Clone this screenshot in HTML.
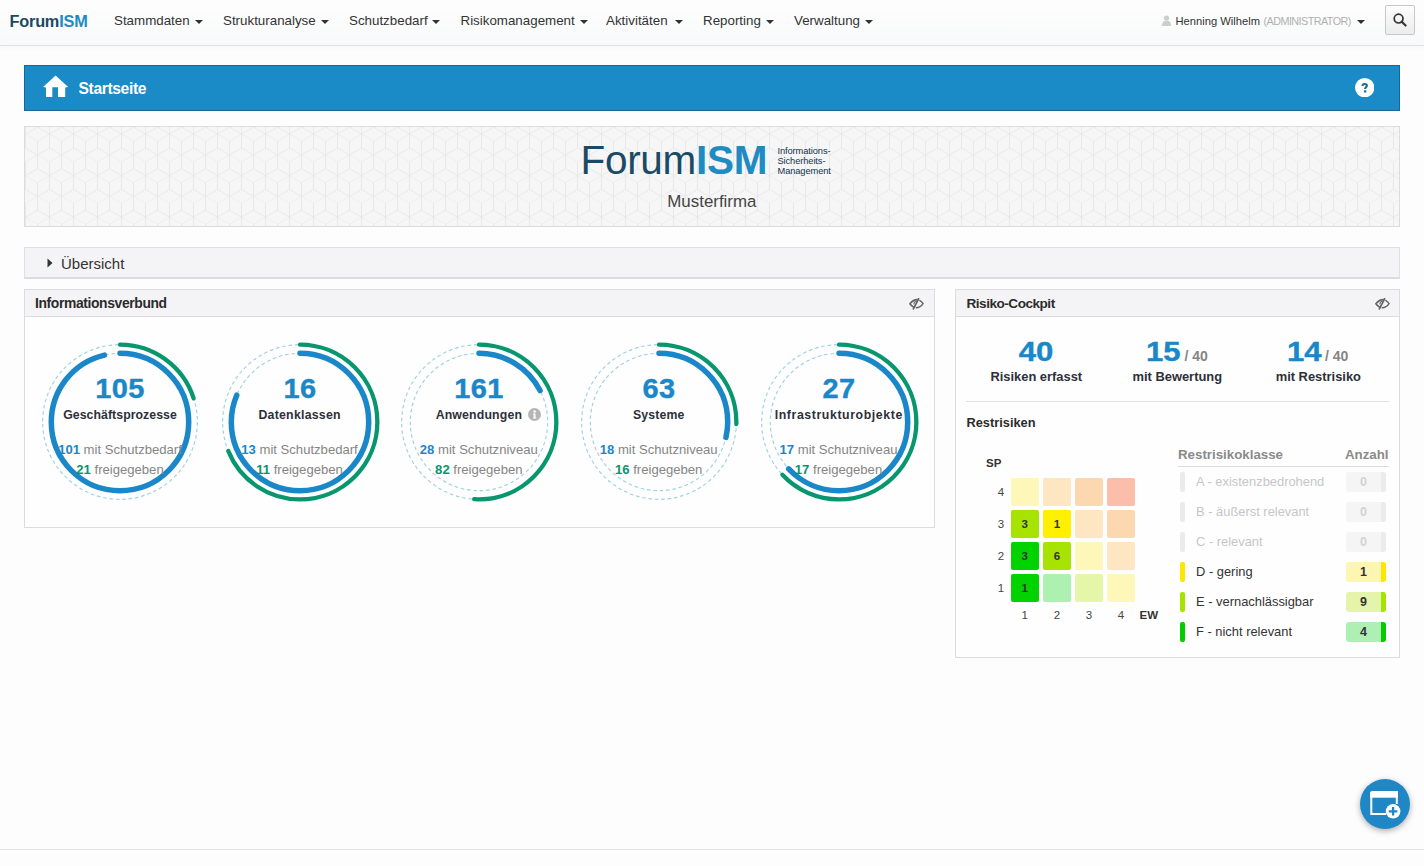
<!DOCTYPE html>
<html><head><meta charset="utf-8">
<style>
*{box-sizing:border-box;margin:0;padding:0}
html,body{width:1424px;height:866px;overflow:hidden;background:#fdfdfd;font-family:"Liberation Sans",sans-serif;color:#333}
.abs{position:absolute}
.t{position:absolute;line-height:1;white-space:nowrap}
#nav{position:absolute;left:0;top:0;width:1424px;height:46px;background:linear-gradient(#fefefe,#f8f9fa);border-bottom:1px solid #e2e2e4;box-shadow:0 1px 4px rgba(0,0,0,.035)}
#hdr{position:absolute;left:24px;top:65px;width:1376px;height:46px;background:#1b8bc8;border:1px solid #1a6593}
#banner{position:absolute;left:24px;top:126px;width:1376px;height:101px;background:#f6f6f7;border:1px solid #dcdcde;overflow:hidden}
#ov{position:absolute;left:24px;top:247px;width:1376px;height:32px;background:#f4f4f6;border:1px solid #e0e0e2;border-bottom:2px solid #dcdcdf}
.panel{position:absolute;background:#fefefe;border:1px solid #dcdcde}
.ph{position:absolute;left:0;top:0;right:0;height:27px;background:#f4f4f6;border-bottom:1px solid #dcdcde}
</style></head>
<body>

<div id="nav">
<div class="t" style="left:9.5px;top:13.20px;font-size:16.3px;color:#333;font-weight:bold;letter-spacing:-0.2px;"><span style="color:#1b4a65">Forum</span><span style="color:#1e8bc3">ISM</span></div>
<div class="t" style="left:114px;top:13.70px;font-size:13.35px;color:#333;">Stammdaten</div>
<div class="abs" style="left:195px;top:20px;width:0;height:0;border-left:4.0px solid transparent;border-right:4.0px solid transparent;border-top:4px solid #333"></div>
<div class="t" style="left:223px;top:13.70px;font-size:13.35px;color:#333;">Strukturanalyse</div>
<div class="abs" style="left:321px;top:20px;width:0;height:0;border-left:4.0px solid transparent;border-right:4.0px solid transparent;border-top:4px solid #333"></div>
<div class="t" style="left:349px;top:13.70px;font-size:13.35px;color:#333;">Schutzbedarf</div>
<div class="abs" style="left:432px;top:20px;width:0;height:0;border-left:4.0px solid transparent;border-right:4.0px solid transparent;border-top:4px solid #333"></div>
<div class="t" style="left:460.5px;top:13.70px;font-size:13.35px;color:#333;">Risikomanagement</div>
<div class="abs" style="left:579.5px;top:20px;width:0;height:0;border-left:4.0px solid transparent;border-right:4.0px solid transparent;border-top:4px solid #333"></div>
<div class="t" style="left:606px;top:13.70px;font-size:13.35px;color:#333;">Aktivitäten</div>
<div class="abs" style="left:675px;top:20px;width:0;height:0;border-left:4.0px solid transparent;border-right:4.0px solid transparent;border-top:4px solid #333"></div>
<div class="t" style="left:703px;top:13.70px;font-size:13.35px;color:#333;">Reporting</div>
<div class="abs" style="left:766px;top:20px;width:0;height:0;border-left:4.0px solid transparent;border-right:4.0px solid transparent;border-top:4px solid #333"></div>
<div class="t" style="left:794px;top:13.70px;font-size:13.35px;color:#333;">Verwaltung</div>
<div class="abs" style="left:864.5px;top:20px;width:0;height:0;border-left:4.0px solid transparent;border-right:4.0px solid transparent;border-top:4px solid #333"></div>
<div class="t" style="left:1175.5px;top:15.82px;font-size:11.2px;color:#333;">Henning Wilhelm</div>
<div class="t" style="left:1263.5px;top:16.16px;font-size:10.8px;color:#b0b0b0;letter-spacing:-0.55px;">(ADMINISTRATOR)</div>
<div class="abs" style="left:1357px;top:20px;width:0;height:0;border-left:4.0px solid transparent;border-right:4.0px solid transparent;border-top:4px solid #333"></div>
<svg class="abs" style="left:1162px;top:15px" width="9" height="11" viewBox="0 0 9 11"><circle cx="4.5" cy="3" r="2.6" fill="#cdcdcd"/><path d="M0 11 C0 6.5 2 5.8 4.5 5.8 C7 5.8 9 6.5 9 11Z" fill="#cdcdcd"/></svg>
<div class="abs" style="left:1385px;top:5px;width:30px;height:30px;border:1px solid #c8c8c8;border-radius:2px;background:linear-gradient(#fdfdfd,#ececec)"></div>
<svg class="abs" style="left:1393px;top:13px" width="14" height="14" viewBox="0 0 14 14"><circle cx="5.6" cy="5.6" r="4.4" fill="none" stroke="#333" stroke-width="1.7"/><path d="M8.7 8.7 L12.6 12.6" stroke="#333" stroke-width="2.1" stroke-linecap="round"/></svg>
</div>
<div id="hdr"></div>
<svg class="abs" style="left:42px;top:75px" width="28" height="24" viewBox="0 0 28 24"><path d="M13.6 0.6 L26.2 11.9 L23.2 12.4 V22.1 H16 V12.3 H10.3 V22.1 H4 V12.4 L1.1 11.9 Z" fill="#fff"/></svg>
<div class="t" style="left:78.5px;top:81.19px;font-size:15.6px;color:#fff;font-weight:bold;letter-spacing:-0.35px;">Startseite</div>
<svg class="abs" style="left:1354.5px;top:77.8px" width="19.4" height="19.4" viewBox="0 0 19.4 19.4"><circle cx="9.7" cy="9.7" r="9.7" fill="#fff"/><path d="M7.5 8 C7.5 6.5 8.4 6 9.7 6 C11 6 11.9 6.6 11.9 7.7 C11.9 9.1 10.1 9.3 10.1 11" fill="none" stroke="#1c6d9e" stroke-width="2.1"/><rect x="8.9" y="12.3" width="2.4" height="2.2" fill="#1c6d9e"/></svg>
<div id="banner">
<svg class="abs" style="left:0;top:0" width="1374" height="99"><path d="M-35.5 -55.3L-23.5 -62.2L-11.5 -55.3M-35.5 -41.4L-23.5 -34.5L-11.5 -41.4M-35.5 -55.3L-23.5 -48.3L-11.5 -55.3M-11.5 -55.3L0.5 -62.2L12.5 -55.3M-11.5 -41.4L0.5 -34.5L12.5 -41.4M-11.5 -55.3L0.5 -48.3L12.5 -55.3M12.5 -55.3L24.5 -62.2L36.5 -55.3M12.5 -41.4L24.5 -34.5L36.5 -41.4M12.5 -55.3L24.5 -48.3L36.5 -55.3M36.5 -55.3L48.5 -62.2L60.5 -55.3M36.5 -41.4L48.5 -34.5L60.5 -41.4M36.5 -55.3L48.5 -48.3L60.5 -55.3M60.5 -55.3L72.5 -62.2L84.5 -55.3M60.5 -41.4L72.5 -34.5L84.5 -41.4M60.5 -55.3L72.5 -48.3L84.5 -55.3M84.5 -55.3L96.5 -62.2L108.5 -55.3M84.5 -41.4L96.5 -34.5L108.5 -41.4M84.5 -55.3L96.5 -48.3L108.5 -55.3M108.5 -55.3L120.5 -62.2L132.5 -55.3M108.5 -41.4L120.5 -34.5L132.5 -41.4M108.5 -55.3L120.5 -48.3L132.5 -55.3M132.5 -55.3L144.5 -62.2L156.5 -55.3M132.5 -41.4L144.5 -34.5L156.5 -41.4M132.5 -55.3L144.5 -48.3L156.5 -55.3M156.5 -55.3L168.5 -62.2L180.5 -55.3M156.5 -41.4L168.5 -34.5L180.5 -41.4M156.5 -55.3L168.5 -48.3L180.5 -55.3M180.5 -55.3L192.5 -62.2L204.5 -55.3M180.5 -41.4L192.5 -34.5L204.5 -41.4M180.5 -55.3L192.5 -48.3L204.5 -55.3M204.5 -55.3L216.5 -62.2L228.5 -55.3M204.5 -41.4L216.5 -34.5L228.5 -41.4M204.5 -55.3L216.5 -48.3L228.5 -55.3M228.5 -55.3L240.5 -62.2L252.5 -55.3M228.5 -41.4L240.5 -34.5L252.5 -41.4M228.5 -55.3L240.5 -48.3L252.5 -55.3M252.5 -55.3L264.5 -62.2L276.5 -55.3M252.5 -41.4L264.5 -34.5L276.5 -41.4M252.5 -55.3L264.5 -48.3L276.5 -55.3M276.5 -55.3L288.5 -62.2L300.5 -55.3M276.5 -41.4L288.5 -34.5L300.5 -41.4M276.5 -55.3L288.5 -48.3L300.5 -55.3M300.5 -55.3L312.5 -62.2L324.5 -55.3M300.5 -41.4L312.5 -34.5L324.5 -41.4M300.5 -55.3L312.5 -48.3L324.5 -55.3M324.5 -55.3L336.5 -62.2L348.5 -55.3M324.5 -41.4L336.5 -34.5L348.5 -41.4M324.5 -55.3L336.5 -48.3L348.5 -55.3M348.5 -55.3L360.5 -62.2L372.5 -55.3M348.5 -41.4L360.5 -34.5L372.5 -41.4M348.5 -55.3L360.5 -48.3L372.5 -55.3M372.5 -55.3L384.5 -62.2L396.5 -55.3M372.5 -41.4L384.5 -34.5L396.5 -41.4M372.5 -55.3L384.5 -48.3L396.5 -55.3M396.5 -55.3L408.5 -62.2L420.5 -55.3M396.5 -41.4L408.5 -34.5L420.5 -41.4M396.5 -55.3L408.5 -48.3L420.5 -55.3M420.5 -55.3L432.5 -62.2L444.5 -55.3M420.5 -41.4L432.5 -34.5L444.5 -41.4M420.5 -55.3L432.5 -48.3L444.5 -55.3M444.5 -55.3L456.5 -62.2L468.5 -55.3M444.5 -41.4L456.5 -34.5L468.5 -41.4M444.5 -55.3L456.5 -48.3L468.5 -55.3M468.5 -55.3L480.5 -62.2L492.5 -55.3M468.5 -41.4L480.5 -34.5L492.5 -41.4M468.5 -55.3L480.5 -48.3L492.5 -55.3M492.5 -55.3L504.5 -62.2L516.5 -55.3M492.5 -41.4L504.5 -34.5L516.5 -41.4M492.5 -55.3L504.5 -48.3L516.5 -55.3M516.5 -55.3L528.5 -62.2L540.5 -55.3M516.5 -41.4L528.5 -34.5L540.5 -41.4M516.5 -55.3L528.5 -48.3L540.5 -55.3M540.5 -55.3L552.5 -62.2L564.5 -55.3M540.5 -41.4L552.5 -34.5L564.5 -41.4M540.5 -55.3L552.5 -48.3L564.5 -55.3M564.5 -55.3L576.5 -62.2L588.5 -55.3M564.5 -41.4L576.5 -34.5L588.5 -41.4M564.5 -55.3L576.5 -48.3L588.5 -55.3M588.5 -55.3L600.5 -62.2L612.5 -55.3M588.5 -41.4L600.5 -34.5L612.5 -41.4M588.5 -55.3L600.5 -48.3L612.5 -55.3M612.5 -55.3L624.5 -62.2L636.5 -55.3M612.5 -41.4L624.5 -34.5L636.5 -41.4M612.5 -55.3L624.5 -48.3L636.5 -55.3M636.5 -55.3L648.5 -62.2L660.5 -55.3M636.5 -41.4L648.5 -34.5L660.5 -41.4M636.5 -55.3L648.5 -48.3L660.5 -55.3M660.5 -55.3L672.5 -62.2L684.5 -55.3M660.5 -41.4L672.5 -34.5L684.5 -41.4M660.5 -55.3L672.5 -48.3L684.5 -55.3M684.5 -55.3L696.5 -62.2L708.5 -55.3M684.5 -41.4L696.5 -34.5L708.5 -41.4M684.5 -55.3L696.5 -48.3L708.5 -55.3M708.5 -55.3L720.5 -62.2L732.5 -55.3M708.5 -41.4L720.5 -34.5L732.5 -41.4M708.5 -55.3L720.5 -48.3L732.5 -55.3M732.5 -55.3L744.5 -62.2L756.5 -55.3M732.5 -41.4L744.5 -34.5L756.5 -41.4M732.5 -55.3L744.5 -48.3L756.5 -55.3M756.5 -55.3L768.5 -62.2L780.5 -55.3M756.5 -41.4L768.5 -34.5L780.5 -41.4M756.5 -55.3L768.5 -48.3L780.5 -55.3M780.5 -55.3L792.5 -62.2L804.5 -55.3M780.5 -41.4L792.5 -34.5L804.5 -41.4M780.5 -55.3L792.5 -48.3L804.5 -55.3M804.5 -55.3L816.5 -62.2L828.5 -55.3M804.5 -41.4L816.5 -34.5L828.5 -41.4M804.5 -55.3L816.5 -48.3L828.5 -55.3M828.5 -55.3L840.5 -62.2L852.5 -55.3M828.5 -41.4L840.5 -34.5L852.5 -41.4M828.5 -55.3L840.5 -48.3L852.5 -55.3M852.5 -55.3L864.5 -62.2L876.5 -55.3M852.5 -41.4L864.5 -34.5L876.5 -41.4M852.5 -55.3L864.5 -48.3L876.5 -55.3M876.5 -55.3L888.5 -62.2L900.5 -55.3M876.5 -41.4L888.5 -34.5L900.5 -41.4M876.5 -55.3L888.5 -48.3L900.5 -55.3M900.5 -55.3L912.5 -62.2L924.5 -55.3M900.5 -41.4L912.5 -34.5L924.5 -41.4M900.5 -55.3L912.5 -48.3L924.5 -55.3M924.5 -55.3L936.5 -62.2L948.5 -55.3M924.5 -41.4L936.5 -34.5L948.5 -41.4M924.5 -55.3L936.5 -48.3L948.5 -55.3M948.5 -55.3L960.5 -62.2L972.5 -55.3M948.5 -41.4L960.5 -34.5L972.5 -41.4M948.5 -55.3L960.5 -48.3L972.5 -55.3M972.5 -55.3L984.5 -62.2L996.5 -55.3M972.5 -41.4L984.5 -34.5L996.5 -41.4M972.5 -55.3L984.5 -48.3L996.5 -55.3M996.5 -55.3L1008.5 -62.2L1020.5 -55.3M996.5 -41.4L1008.5 -34.5L1020.5 -41.4M996.5 -55.3L1008.5 -48.3L1020.5 -55.3M1020.5 -55.3L1032.5 -62.2L1044.5 -55.3M1020.5 -41.4L1032.5 -34.5L1044.5 -41.4M1020.5 -55.3L1032.5 -48.3L1044.5 -55.3M1044.5 -55.3L1056.5 -62.2L1068.5 -55.3M1044.5 -41.4L1056.5 -34.5L1068.5 -41.4M1044.5 -55.3L1056.5 -48.3L1068.5 -55.3M1068.5 -55.3L1080.5 -62.2L1092.5 -55.3M1068.5 -41.4L1080.5 -34.5L1092.5 -41.4M1068.5 -55.3L1080.5 -48.3L1092.5 -55.3M1092.5 -55.3L1104.5 -62.2L1116.5 -55.3M1092.5 -41.4L1104.5 -34.5L1116.5 -41.4M1092.5 -55.3L1104.5 -48.3L1116.5 -55.3M1116.5 -55.3L1128.5 -62.2L1140.5 -55.3M1116.5 -41.4L1128.5 -34.5L1140.5 -41.4M1116.5 -55.3L1128.5 -48.3L1140.5 -55.3M1140.5 -55.3L1152.5 -62.2L1164.5 -55.3M1140.5 -41.4L1152.5 -34.5L1164.5 -41.4M1140.5 -55.3L1152.5 -48.3L1164.5 -55.3M1164.5 -55.3L1176.5 -62.2L1188.5 -55.3M1164.5 -41.4L1176.5 -34.5L1188.5 -41.4M1164.5 -55.3L1176.5 -48.3L1188.5 -55.3M1188.5 -55.3L1200.5 -62.2L1212.5 -55.3M1188.5 -41.4L1200.5 -34.5L1212.5 -41.4M1188.5 -55.3L1200.5 -48.3L1212.5 -55.3M1212.5 -55.3L1224.5 -62.2L1236.5 -55.3M1212.5 -41.4L1224.5 -34.5L1236.5 -41.4M1212.5 -55.3L1224.5 -48.3L1236.5 -55.3M1236.5 -55.3L1248.5 -62.2L1260.5 -55.3M1236.5 -41.4L1248.5 -34.5L1260.5 -41.4M1236.5 -55.3L1248.5 -48.3L1260.5 -55.3M1260.5 -55.3L1272.5 -62.2L1284.5 -55.3M1260.5 -41.4L1272.5 -34.5L1284.5 -41.4M1260.5 -55.3L1272.5 -48.3L1284.5 -55.3M1284.5 -55.3L1296.5 -62.2L1308.5 -55.3M1284.5 -41.4L1296.5 -34.5L1308.5 -41.4M1284.5 -55.3L1296.5 -48.3L1308.5 -55.3M1308.5 -55.3L1320.5 -62.2L1332.5 -55.3M1308.5 -41.4L1320.5 -34.5L1332.5 -41.4M1308.5 -55.3L1320.5 -48.3L1332.5 -55.3M1332.5 -55.3L1344.5 -62.2L1356.5 -55.3M1332.5 -41.4L1344.5 -34.5L1356.5 -41.4M1332.5 -55.3L1344.5 -48.3L1356.5 -55.3M1356.5 -55.3L1368.5 -62.2L1380.5 -55.3M1356.5 -41.4L1368.5 -34.5L1380.5 -41.4M1356.5 -55.3L1368.5 -48.3L1380.5 -55.3M1380.5 -55.3L1392.5 -62.2L1404.5 -55.3M1380.5 -41.4L1392.5 -34.5L1404.5 -41.4M1380.5 -55.3L1392.5 -48.3L1404.5 -55.3M-23.5 -34.5L-11.5 -41.4L0.5 -34.5M-23.5 -20.6L-11.5 -13.7L0.5 -20.6M-23.5 -34.5L-11.5 -27.6L0.5 -34.5M0.5 -34.5L12.5 -41.4L24.5 -34.5M0.5 -20.6L12.5 -13.7L24.5 -20.6M0.5 -34.5L12.5 -27.6L24.5 -34.5M24.5 -34.5L36.5 -41.4L48.5 -34.5M24.5 -20.6L36.5 -13.7L48.5 -20.6M24.5 -34.5L36.5 -27.6L48.5 -34.5M48.5 -34.5L60.5 -41.4L72.5 -34.5M48.5 -20.6L60.5 -13.7L72.5 -20.6M48.5 -34.5L60.5 -27.6L72.5 -34.5M72.5 -34.5L84.5 -41.4L96.5 -34.5M72.5 -20.6L84.5 -13.7L96.5 -20.6M72.5 -34.5L84.5 -27.6L96.5 -34.5M96.5 -34.5L108.5 -41.4L120.5 -34.5M96.5 -20.6L108.5 -13.7L120.5 -20.6M96.5 -34.5L108.5 -27.6L120.5 -34.5M120.5 -34.5L132.5 -41.4L144.5 -34.5M120.5 -20.6L132.5 -13.7L144.5 -20.6M120.5 -34.5L132.5 -27.6L144.5 -34.5M144.5 -34.5L156.5 -41.4L168.5 -34.5M144.5 -20.6L156.5 -13.7L168.5 -20.6M144.5 -34.5L156.5 -27.6L168.5 -34.5M168.5 -34.5L180.5 -41.4L192.5 -34.5M168.5 -20.6L180.5 -13.7L192.5 -20.6M168.5 -34.5L180.5 -27.6L192.5 -34.5M192.5 -34.5L204.5 -41.4L216.5 -34.5M192.5 -20.6L204.5 -13.7L216.5 -20.6M192.5 -34.5L204.5 -27.6L216.5 -34.5M216.5 -34.5L228.5 -41.4L240.5 -34.5M216.5 -20.6L228.5 -13.7L240.5 -20.6M216.5 -34.5L228.5 -27.6L240.5 -34.5M240.5 -34.5L252.5 -41.4L264.5 -34.5M240.5 -20.6L252.5 -13.7L264.5 -20.6M240.5 -34.5L252.5 -27.6L264.5 -34.5M264.5 -34.5L276.5 -41.4L288.5 -34.5M264.5 -20.6L276.5 -13.7L288.5 -20.6M264.5 -34.5L276.5 -27.6L288.5 -34.5M288.5 -34.5L300.5 -41.4L312.5 -34.5M288.5 -20.6L300.5 -13.7L312.5 -20.6M288.5 -34.5L300.5 -27.6L312.5 -34.5M312.5 -34.5L324.5 -41.4L336.5 -34.5M312.5 -20.6L324.5 -13.7L336.5 -20.6M312.5 -34.5L324.5 -27.6L336.5 -34.5M336.5 -34.5L348.5 -41.4L360.5 -34.5M336.5 -20.6L348.5 -13.7L360.5 -20.6M336.5 -34.5L348.5 -27.6L360.5 -34.5M360.5 -34.5L372.5 -41.4L384.5 -34.5M360.5 -20.6L372.5 -13.7L384.5 -20.6M360.5 -34.5L372.5 -27.6L384.5 -34.5M384.5 -34.5L396.5 -41.4L408.5 -34.5M384.5 -20.6L396.5 -13.7L408.5 -20.6M384.5 -34.5L396.5 -27.6L408.5 -34.5M408.5 -34.5L420.5 -41.4L432.5 -34.5M408.5 -20.6L420.5 -13.7L432.5 -20.6M408.5 -34.5L420.5 -27.6L432.5 -34.5M432.5 -34.5L444.5 -41.4L456.5 -34.5M432.5 -20.6L444.5 -13.7L456.5 -20.6M432.5 -34.5L444.5 -27.6L456.5 -34.5M456.5 -34.5L468.5 -41.4L480.5 -34.5M456.5 -20.6L468.5 -13.7L480.5 -20.6M456.5 -34.5L468.5 -27.6L480.5 -34.5M480.5 -34.5L492.5 -41.4L504.5 -34.5M480.5 -20.6L492.5 -13.7L504.5 -20.6M480.5 -34.5L492.5 -27.6L504.5 -34.5M504.5 -34.5L516.5 -41.4L528.5 -34.5M504.5 -20.6L516.5 -13.7L528.5 -20.6M504.5 -34.5L516.5 -27.6L528.5 -34.5M528.5 -34.5L540.5 -41.4L552.5 -34.5M528.5 -20.6L540.5 -13.7L552.5 -20.6M528.5 -34.5L540.5 -27.6L552.5 -34.5M552.5 -34.5L564.5 -41.4L576.5 -34.5M552.5 -20.6L564.5 -13.7L576.5 -20.6M552.5 -34.5L564.5 -27.6L576.5 -34.5M576.5 -34.5L588.5 -41.4L600.5 -34.5M576.5 -20.6L588.5 -13.7L600.5 -20.6M576.5 -34.5L588.5 -27.6L600.5 -34.5M600.5 -34.5L612.5 -41.4L624.5 -34.5M600.5 -20.6L612.5 -13.7L624.5 -20.6M600.5 -34.5L612.5 -27.6L624.5 -34.5M624.5 -34.5L636.5 -41.4L648.5 -34.5M624.5 -20.6L636.5 -13.7L648.5 -20.6M624.5 -34.5L636.5 -27.6L648.5 -34.5M648.5 -34.5L660.5 -41.4L672.5 -34.5M648.5 -20.6L660.5 -13.7L672.5 -20.6M648.5 -34.5L660.5 -27.6L672.5 -34.5M672.5 -34.5L684.5 -41.4L696.5 -34.5M672.5 -20.6L684.5 -13.7L696.5 -20.6M672.5 -34.5L684.5 -27.6L696.5 -34.5M696.5 -34.5L708.5 -41.4L720.5 -34.5M696.5 -20.6L708.5 -13.7L720.5 -20.6M696.5 -34.5L708.5 -27.6L720.5 -34.5M720.5 -34.5L732.5 -41.4L744.5 -34.5M720.5 -20.6L732.5 -13.7L744.5 -20.6M720.5 -34.5L732.5 -27.6L744.5 -34.5M744.5 -34.5L756.5 -41.4L768.5 -34.5M744.5 -20.6L756.5 -13.7L768.5 -20.6M744.5 -34.5L756.5 -27.6L768.5 -34.5M768.5 -34.5L780.5 -41.4L792.5 -34.5M768.5 -20.6L780.5 -13.7L792.5 -20.6M768.5 -34.5L780.5 -27.6L792.5 -34.5M792.5 -34.5L804.5 -41.4L816.5 -34.5M792.5 -20.6L804.5 -13.7L816.5 -20.6M792.5 -34.5L804.5 -27.6L816.5 -34.5M816.5 -34.5L828.5 -41.4L840.5 -34.5M816.5 -20.6L828.5 -13.7L840.5 -20.6M816.5 -34.5L828.5 -27.6L840.5 -34.5M840.5 -34.5L852.5 -41.4L864.5 -34.5M840.5 -20.6L852.5 -13.7L864.5 -20.6M840.5 -34.5L852.5 -27.6L864.5 -34.5M864.5 -34.5L876.5 -41.4L888.5 -34.5M864.5 -20.6L876.5 -13.7L888.5 -20.6M864.5 -34.5L876.5 -27.6L888.5 -34.5M888.5 -34.5L900.5 -41.4L912.5 -34.5M888.5 -20.6L900.5 -13.7L912.5 -20.6M888.5 -34.5L900.5 -27.6L912.5 -34.5M912.5 -34.5L924.5 -41.4L936.5 -34.5M912.5 -20.6L924.5 -13.7L936.5 -20.6M912.5 -34.5L924.5 -27.6L936.5 -34.5M936.5 -34.5L948.5 -41.4L960.5 -34.5M936.5 -20.6L948.5 -13.7L960.5 -20.6M936.5 -34.5L948.5 -27.6L960.5 -34.5M960.5 -34.5L972.5 -41.4L984.5 -34.5M960.5 -20.6L972.5 -13.7L984.5 -20.6M960.5 -34.5L972.5 -27.6L984.5 -34.5M984.5 -34.5L996.5 -41.4L1008.5 -34.5M984.5 -20.6L996.5 -13.7L1008.5 -20.6M984.5 -34.5L996.5 -27.6L1008.5 -34.5M1008.5 -34.5L1020.5 -41.4L1032.5 -34.5M1008.5 -20.6L1020.5 -13.7L1032.5 -20.6M1008.5 -34.5L1020.5 -27.6L1032.5 -34.5M1032.5 -34.5L1044.5 -41.4L1056.5 -34.5M1032.5 -20.6L1044.5 -13.7L1056.5 -20.6M1032.5 -34.5L1044.5 -27.6L1056.5 -34.5M1056.5 -34.5L1068.5 -41.4L1080.5 -34.5M1056.5 -20.6L1068.5 -13.7L1080.5 -20.6M1056.5 -34.5L1068.5 -27.6L1080.5 -34.5M1080.5 -34.5L1092.5 -41.4L1104.5 -34.5M1080.5 -20.6L1092.5 -13.7L1104.5 -20.6M1080.5 -34.5L1092.5 -27.6L1104.5 -34.5M1104.5 -34.5L1116.5 -41.4L1128.5 -34.5M1104.5 -20.6L1116.5 -13.7L1128.5 -20.6M1104.5 -34.5L1116.5 -27.6L1128.5 -34.5M1128.5 -34.5L1140.5 -41.4L1152.5 -34.5M1128.5 -20.6L1140.5 -13.7L1152.5 -20.6M1128.5 -34.5L1140.5 -27.6L1152.5 -34.5M1152.5 -34.5L1164.5 -41.4L1176.5 -34.5M1152.5 -20.6L1164.5 -13.7L1176.5 -20.6M1152.5 -34.5L1164.5 -27.6L1176.5 -34.5M1176.5 -34.5L1188.5 -41.4L1200.5 -34.5M1176.5 -20.6L1188.5 -13.7L1200.5 -20.6M1176.5 -34.5L1188.5 -27.6L1200.5 -34.5M1200.5 -34.5L1212.5 -41.4L1224.5 -34.5M1200.5 -20.6L1212.5 -13.7L1224.5 -20.6M1200.5 -34.5L1212.5 -27.6L1224.5 -34.5M1224.5 -34.5L1236.5 -41.4L1248.5 -34.5M1224.5 -20.6L1236.5 -13.7L1248.5 -20.6M1224.5 -34.5L1236.5 -27.6L1248.5 -34.5M1248.5 -34.5L1260.5 -41.4L1272.5 -34.5M1248.5 -20.6L1260.5 -13.7L1272.5 -20.6M1248.5 -34.5L1260.5 -27.6L1272.5 -34.5M1272.5 -34.5L1284.5 -41.4L1296.5 -34.5M1272.5 -20.6L1284.5 -13.7L1296.5 -20.6M1272.5 -34.5L1284.5 -27.6L1296.5 -34.5M1296.5 -34.5L1308.5 -41.4L1320.5 -34.5M1296.5 -20.6L1308.5 -13.7L1320.5 -20.6M1296.5 -34.5L1308.5 -27.6L1320.5 -34.5M1320.5 -34.5L1332.5 -41.4L1344.5 -34.5M1320.5 -20.6L1332.5 -13.7L1344.5 -20.6M1320.5 -34.5L1332.5 -27.6L1344.5 -34.5M1344.5 -34.5L1356.5 -41.4L1368.5 -34.5M1344.5 -20.6L1356.5 -13.7L1368.5 -20.6M1344.5 -34.5L1356.5 -27.6L1368.5 -34.5M1368.5 -34.5L1380.5 -41.4L1392.5 -34.5M1368.5 -20.6L1380.5 -13.7L1392.5 -20.6M1368.5 -34.5L1380.5 -27.6L1392.5 -34.5M-35.5 -13.7L-23.5 -20.6L-11.5 -13.7M-35.5 0.1L-23.5 7.1L-11.5 0.1M-35.5 -13.7L-23.5 -6.8L-11.5 -13.7M-11.5 -13.7L0.5 -20.6L12.5 -13.7M-11.5 0.1L0.5 7.1L12.5 0.1M-11.5 -13.7L0.5 -6.8L12.5 -13.7M12.5 -13.7L24.5 -20.6L36.5 -13.7M12.5 0.1L24.5 7.1L36.5 0.1M12.5 -13.7L24.5 -6.8L36.5 -13.7M36.5 -13.7L48.5 -20.6L60.5 -13.7M36.5 0.1L48.5 7.1L60.5 0.1M36.5 -13.7L48.5 -6.8L60.5 -13.7M60.5 -13.7L72.5 -20.6L84.5 -13.7M60.5 0.1L72.5 7.1L84.5 0.1M60.5 -13.7L72.5 -6.8L84.5 -13.7M84.5 -13.7L96.5 -20.6L108.5 -13.7M84.5 0.1L96.5 7.1L108.5 0.1M84.5 -13.7L96.5 -6.8L108.5 -13.7M108.5 -13.7L120.5 -20.6L132.5 -13.7M108.5 0.1L120.5 7.1L132.5 0.1M108.5 -13.7L120.5 -6.8L132.5 -13.7M132.5 -13.7L144.5 -20.6L156.5 -13.7M132.5 0.1L144.5 7.1L156.5 0.1M132.5 -13.7L144.5 -6.8L156.5 -13.7M156.5 -13.7L168.5 -20.6L180.5 -13.7M156.5 0.1L168.5 7.1L180.5 0.1M156.5 -13.7L168.5 -6.8L180.5 -13.7M180.5 -13.7L192.5 -20.6L204.5 -13.7M180.5 0.1L192.5 7.1L204.5 0.1M180.5 -13.7L192.5 -6.8L204.5 -13.7M204.5 -13.7L216.5 -20.6L228.5 -13.7M204.5 0.1L216.5 7.1L228.5 0.1M204.5 -13.7L216.5 -6.8L228.5 -13.7M228.5 -13.7L240.5 -20.6L252.5 -13.7M228.5 0.1L240.5 7.1L252.5 0.1M228.5 -13.7L240.5 -6.8L252.5 -13.7M252.5 -13.7L264.5 -20.6L276.5 -13.7M252.5 0.1L264.5 7.1L276.5 0.1M252.5 -13.7L264.5 -6.8L276.5 -13.7M276.5 -13.7L288.5 -20.6L300.5 -13.7M276.5 0.1L288.5 7.1L300.5 0.1M276.5 -13.7L288.5 -6.8L300.5 -13.7M300.5 -13.7L312.5 -20.6L324.5 -13.7M300.5 0.1L312.5 7.1L324.5 0.1M300.5 -13.7L312.5 -6.8L324.5 -13.7M324.5 -13.7L336.5 -20.6L348.5 -13.7M324.5 0.1L336.5 7.1L348.5 0.1M324.5 -13.7L336.5 -6.8L348.5 -13.7M348.5 -13.7L360.5 -20.6L372.5 -13.7M348.5 0.1L360.5 7.1L372.5 0.1M348.5 -13.7L360.5 -6.8L372.5 -13.7M372.5 -13.7L384.5 -20.6L396.5 -13.7M372.5 0.1L384.5 7.1L396.5 0.1M372.5 -13.7L384.5 -6.8L396.5 -13.7M396.5 -13.7L408.5 -20.6L420.5 -13.7M396.5 0.1L408.5 7.1L420.5 0.1M396.5 -13.7L408.5 -6.8L420.5 -13.7M420.5 -13.7L432.5 -20.6L444.5 -13.7M420.5 0.1L432.5 7.1L444.5 0.1M420.5 -13.7L432.5 -6.8L444.5 -13.7M444.5 -13.7L456.5 -20.6L468.5 -13.7M444.5 0.1L456.5 7.1L468.5 0.1M444.5 -13.7L456.5 -6.8L468.5 -13.7M468.5 -13.7L480.5 -20.6L492.5 -13.7M468.5 0.1L480.5 7.1L492.5 0.1M468.5 -13.7L480.5 -6.8L492.5 -13.7M492.5 -13.7L504.5 -20.6L516.5 -13.7M492.5 0.1L504.5 7.1L516.5 0.1M492.5 -13.7L504.5 -6.8L516.5 -13.7M516.5 -13.7L528.5 -20.6L540.5 -13.7M516.5 0.1L528.5 7.1L540.5 0.1M516.5 -13.7L528.5 -6.8L540.5 -13.7M540.5 -13.7L552.5 -20.6L564.5 -13.7M540.5 0.1L552.5 7.1L564.5 0.1M540.5 -13.7L552.5 -6.8L564.5 -13.7M564.5 -13.7L576.5 -20.6L588.5 -13.7M564.5 0.1L576.5 7.1L588.5 0.1M564.5 -13.7L576.5 -6.8L588.5 -13.7M588.5 -13.7L600.5 -20.6L612.5 -13.7M588.5 0.1L600.5 7.1L612.5 0.1M588.5 -13.7L600.5 -6.8L612.5 -13.7M612.5 -13.7L624.5 -20.6L636.5 -13.7M612.5 0.1L624.5 7.1L636.5 0.1M612.5 -13.7L624.5 -6.8L636.5 -13.7M636.5 -13.7L648.5 -20.6L660.5 -13.7M636.5 0.1L648.5 7.1L660.5 0.1M636.5 -13.7L648.5 -6.8L660.5 -13.7M660.5 -13.7L672.5 -20.6L684.5 -13.7M660.5 0.1L672.5 7.1L684.5 0.1M660.5 -13.7L672.5 -6.8L684.5 -13.7M684.5 -13.7L696.5 -20.6L708.5 -13.7M684.5 0.1L696.5 7.1L708.5 0.1M684.5 -13.7L696.5 -6.8L708.5 -13.7M708.5 -13.7L720.5 -20.6L732.5 -13.7M708.5 0.1L720.5 7.1L732.5 0.1M708.5 -13.7L720.5 -6.8L732.5 -13.7M732.5 -13.7L744.5 -20.6L756.5 -13.7M732.5 0.1L744.5 7.1L756.5 0.1M732.5 -13.7L744.5 -6.8L756.5 -13.7M756.5 -13.7L768.5 -20.6L780.5 -13.7M756.5 0.1L768.5 7.1L780.5 0.1M756.5 -13.7L768.5 -6.8L780.5 -13.7M780.5 -13.7L792.5 -20.6L804.5 -13.7M780.5 0.1L792.5 7.1L804.5 0.1M780.5 -13.7L792.5 -6.8L804.5 -13.7M804.5 -13.7L816.5 -20.6L828.5 -13.7M804.5 0.1L816.5 7.1L828.5 0.1M804.5 -13.7L816.5 -6.8L828.5 -13.7M828.5 -13.7L840.5 -20.6L852.5 -13.7M828.5 0.1L840.5 7.1L852.5 0.1M828.5 -13.7L840.5 -6.8L852.5 -13.7M852.5 -13.7L864.5 -20.6L876.5 -13.7M852.5 0.1L864.5 7.1L876.5 0.1M852.5 -13.7L864.5 -6.8L876.5 -13.7M876.5 -13.7L888.5 -20.6L900.5 -13.7M876.5 0.1L888.5 7.1L900.5 0.1M876.5 -13.7L888.5 -6.8L900.5 -13.7M900.5 -13.7L912.5 -20.6L924.5 -13.7M900.5 0.1L912.5 7.1L924.5 0.1M900.5 -13.7L912.5 -6.8L924.5 -13.7M924.5 -13.7L936.5 -20.6L948.5 -13.7M924.5 0.1L936.5 7.1L948.5 0.1M924.5 -13.7L936.5 -6.8L948.5 -13.7M948.5 -13.7L960.5 -20.6L972.5 -13.7M948.5 0.1L960.5 7.1L972.5 0.1M948.5 -13.7L960.5 -6.8L972.5 -13.7M972.5 -13.7L984.5 -20.6L996.5 -13.7M972.5 0.1L984.5 7.1L996.5 0.1M972.5 -13.7L984.5 -6.8L996.5 -13.7M996.5 -13.7L1008.5 -20.6L1020.5 -13.7M996.5 0.1L1008.5 7.1L1020.5 0.1M996.5 -13.7L1008.5 -6.8L1020.5 -13.7M1020.5 -13.7L1032.5 -20.6L1044.5 -13.7M1020.5 0.1L1032.5 7.1L1044.5 0.1M1020.5 -13.7L1032.5 -6.8L1044.5 -13.7M1044.5 -13.7L1056.5 -20.6L1068.5 -13.7M1044.5 0.1L1056.5 7.1L1068.5 0.1M1044.5 -13.7L1056.5 -6.8L1068.5 -13.7M1068.5 -13.7L1080.5 -20.6L1092.5 -13.7M1068.5 0.1L1080.5 7.1L1092.5 0.1M1068.5 -13.7L1080.5 -6.8L1092.5 -13.7M1092.5 -13.7L1104.5 -20.6L1116.5 -13.7M1092.5 0.1L1104.5 7.1L1116.5 0.1M1092.5 -13.7L1104.5 -6.8L1116.5 -13.7M1116.5 -13.7L1128.5 -20.6L1140.5 -13.7M1116.5 0.1L1128.5 7.1L1140.5 0.1M1116.5 -13.7L1128.5 -6.8L1140.5 -13.7M1140.5 -13.7L1152.5 -20.6L1164.5 -13.7M1140.5 0.1L1152.5 7.1L1164.5 0.1M1140.5 -13.7L1152.5 -6.8L1164.5 -13.7M1164.5 -13.7L1176.5 -20.6L1188.5 -13.7M1164.5 0.1L1176.5 7.1L1188.5 0.1M1164.5 -13.7L1176.5 -6.8L1188.5 -13.7M1188.5 -13.7L1200.5 -20.6L1212.5 -13.7M1188.5 0.1L1200.5 7.1L1212.5 0.1M1188.5 -13.7L1200.5 -6.8L1212.5 -13.7M1212.5 -13.7L1224.5 -20.6L1236.5 -13.7M1212.5 0.1L1224.5 7.1L1236.5 0.1M1212.5 -13.7L1224.5 -6.8L1236.5 -13.7M1236.5 -13.7L1248.5 -20.6L1260.5 -13.7M1236.5 0.1L1248.5 7.1L1260.5 0.1M1236.5 -13.7L1248.5 -6.8L1260.5 -13.7M1260.5 -13.7L1272.5 -20.6L1284.5 -13.7M1260.5 0.1L1272.5 7.1L1284.5 0.1M1260.5 -13.7L1272.5 -6.8L1284.5 -13.7M1284.5 -13.7L1296.5 -20.6L1308.5 -13.7M1284.5 0.1L1296.5 7.1L1308.5 0.1M1284.5 -13.7L1296.5 -6.8L1308.5 -13.7M1308.5 -13.7L1320.5 -20.6L1332.5 -13.7M1308.5 0.1L1320.5 7.1L1332.5 0.1M1308.5 -13.7L1320.5 -6.8L1332.5 -13.7M1332.5 -13.7L1344.5 -20.6L1356.5 -13.7M1332.5 0.1L1344.5 7.1L1356.5 0.1M1332.5 -13.7L1344.5 -6.8L1356.5 -13.7M1356.5 -13.7L1368.5 -20.6L1380.5 -13.7M1356.5 0.1L1368.5 7.1L1380.5 0.1M1356.5 -13.7L1368.5 -6.8L1380.5 -13.7M1380.5 -13.7L1392.5 -20.6L1404.5 -13.7M1380.5 0.1L1392.5 7.1L1404.5 0.1M1380.5 -13.7L1392.5 -6.8L1404.5 -13.7M-23.5 7.1L-11.5 0.1L0.5 7.1M-23.5 20.9L-11.5 27.9L0.5 20.9M-23.5 7.1L-11.5 14.0L0.5 7.1M0.5 7.1L12.5 0.1L24.5 7.1M0.5 20.9L12.5 27.9L24.5 20.9M0.5 7.1L12.5 14.0L24.5 7.1M24.5 7.1L36.5 0.1L48.5 7.1M24.5 20.9L36.5 27.9L48.5 20.9M24.5 7.1L36.5 14.0L48.5 7.1M48.5 7.1L60.5 0.1L72.5 7.1M48.5 20.9L60.5 27.9L72.5 20.9M48.5 7.1L60.5 14.0L72.5 7.1M72.5 7.1L84.5 0.1L96.5 7.1M72.5 20.9L84.5 27.9L96.5 20.9M72.5 7.1L84.5 14.0L96.5 7.1M96.5 7.1L108.5 0.1L120.5 7.1M96.5 20.9L108.5 27.9L120.5 20.9M96.5 7.1L108.5 14.0L120.5 7.1M120.5 7.1L132.5 0.1L144.5 7.1M120.5 20.9L132.5 27.9L144.5 20.9M120.5 7.1L132.5 14.0L144.5 7.1M144.5 7.1L156.5 0.1L168.5 7.1M144.5 20.9L156.5 27.9L168.5 20.9M144.5 7.1L156.5 14.0L168.5 7.1M168.5 7.1L180.5 0.1L192.5 7.1M168.5 20.9L180.5 27.9L192.5 20.9M168.5 7.1L180.5 14.0L192.5 7.1M192.5 7.1L204.5 0.1L216.5 7.1M192.5 20.9L204.5 27.9L216.5 20.9M192.5 7.1L204.5 14.0L216.5 7.1M216.5 7.1L228.5 0.1L240.5 7.1M216.5 20.9L228.5 27.9L240.5 20.9M216.5 7.1L228.5 14.0L240.5 7.1M240.5 7.1L252.5 0.1L264.5 7.1M240.5 20.9L252.5 27.9L264.5 20.9M240.5 7.1L252.5 14.0L264.5 7.1M264.5 7.1L276.5 0.1L288.5 7.1M264.5 20.9L276.5 27.9L288.5 20.9M264.5 7.1L276.5 14.0L288.5 7.1M288.5 7.1L300.5 0.1L312.5 7.1M288.5 20.9L300.5 27.9L312.5 20.9M288.5 7.1L300.5 14.0L312.5 7.1M312.5 7.1L324.5 0.1L336.5 7.1M312.5 20.9L324.5 27.9L336.5 20.9M312.5 7.1L324.5 14.0L336.5 7.1M336.5 7.1L348.5 0.1L360.5 7.1M336.5 20.9L348.5 27.9L360.5 20.9M336.5 7.1L348.5 14.0L360.5 7.1M360.5 7.1L372.5 0.1L384.5 7.1M360.5 20.9L372.5 27.9L384.5 20.9M360.5 7.1L372.5 14.0L384.5 7.1M384.5 7.1L396.5 0.1L408.5 7.1M384.5 20.9L396.5 27.9L408.5 20.9M384.5 7.1L396.5 14.0L408.5 7.1M408.5 7.1L420.5 0.1L432.5 7.1M408.5 20.9L420.5 27.9L432.5 20.9M408.5 7.1L420.5 14.0L432.5 7.1M432.5 7.1L444.5 0.1L456.5 7.1M432.5 20.9L444.5 27.9L456.5 20.9M432.5 7.1L444.5 14.0L456.5 7.1M456.5 7.1L468.5 0.1L480.5 7.1M456.5 20.9L468.5 27.9L480.5 20.9M456.5 7.1L468.5 14.0L480.5 7.1M480.5 7.1L492.5 0.1L504.5 7.1M480.5 20.9L492.5 27.9L504.5 20.9M480.5 7.1L492.5 14.0L504.5 7.1M504.5 7.1L516.5 0.1L528.5 7.1M504.5 20.9L516.5 27.9L528.5 20.9M504.5 7.1L516.5 14.0L528.5 7.1M528.5 7.1L540.5 0.1L552.5 7.1M528.5 20.9L540.5 27.9L552.5 20.9M528.5 7.1L540.5 14.0L552.5 7.1M552.5 7.1L564.5 0.1L576.5 7.1M552.5 20.9L564.5 27.9L576.5 20.9M552.5 7.1L564.5 14.0L576.5 7.1M576.5 7.1L588.5 0.1L600.5 7.1M576.5 20.9L588.5 27.9L600.5 20.9M576.5 7.1L588.5 14.0L600.5 7.1M600.5 7.1L612.5 0.1L624.5 7.1M600.5 20.9L612.5 27.9L624.5 20.9M600.5 7.1L612.5 14.0L624.5 7.1M624.5 7.1L636.5 0.1L648.5 7.1M624.5 20.9L636.5 27.9L648.5 20.9M624.5 7.1L636.5 14.0L648.5 7.1M648.5 7.1L660.5 0.1L672.5 7.1M648.5 20.9L660.5 27.9L672.5 20.9M648.5 7.1L660.5 14.0L672.5 7.1M672.5 7.1L684.5 0.1L696.5 7.1M672.5 20.9L684.5 27.9L696.5 20.9M672.5 7.1L684.5 14.0L696.5 7.1M696.5 7.1L708.5 0.1L720.5 7.1M696.5 20.9L708.5 27.9L720.5 20.9M696.5 7.1L708.5 14.0L720.5 7.1M720.5 7.1L732.5 0.1L744.5 7.1M720.5 20.9L732.5 27.9L744.5 20.9M720.5 7.1L732.5 14.0L744.5 7.1M744.5 7.1L756.5 0.1L768.5 7.1M744.5 20.9L756.5 27.9L768.5 20.9M744.5 7.1L756.5 14.0L768.5 7.1M768.5 7.1L780.5 0.1L792.5 7.1M768.5 20.9L780.5 27.9L792.5 20.9M768.5 7.1L780.5 14.0L792.5 7.1M792.5 7.1L804.5 0.1L816.5 7.1M792.5 20.9L804.5 27.9L816.5 20.9M792.5 7.1L804.5 14.0L816.5 7.1M816.5 7.1L828.5 0.1L840.5 7.1M816.5 20.9L828.5 27.9L840.5 20.9M816.5 7.1L828.5 14.0L840.5 7.1M840.5 7.1L852.5 0.1L864.5 7.1M840.5 20.9L852.5 27.9L864.5 20.9M840.5 7.1L852.5 14.0L864.5 7.1M864.5 7.1L876.5 0.1L888.5 7.1M864.5 20.9L876.5 27.9L888.5 20.9M864.5 7.1L876.5 14.0L888.5 7.1M888.5 7.1L900.5 0.1L912.5 7.1M888.5 20.9L900.5 27.9L912.5 20.9M888.5 7.1L900.5 14.0L912.5 7.1M912.5 7.1L924.5 0.1L936.5 7.1M912.5 20.9L924.5 27.9L936.5 20.9M912.5 7.1L924.5 14.0L936.5 7.1M936.5 7.1L948.5 0.1L960.5 7.1M936.5 20.9L948.5 27.9L960.5 20.9M936.5 7.1L948.5 14.0L960.5 7.1M960.5 7.1L972.5 0.1L984.5 7.1M960.5 20.9L972.5 27.9L984.5 20.9M960.5 7.1L972.5 14.0L984.5 7.1M984.5 7.1L996.5 0.1L1008.5 7.1M984.5 20.9L996.5 27.9L1008.5 20.9M984.5 7.1L996.5 14.0L1008.5 7.1M1008.5 7.1L1020.5 0.1L1032.5 7.1M1008.5 20.9L1020.5 27.9L1032.5 20.9M1008.5 7.1L1020.5 14.0L1032.5 7.1M1032.5 7.1L1044.5 0.1L1056.5 7.1M1032.5 20.9L1044.5 27.9L1056.5 20.9M1032.5 7.1L1044.5 14.0L1056.5 7.1M1056.5 7.1L1068.5 0.1L1080.5 7.1M1056.5 20.9L1068.5 27.9L1080.5 20.9M1056.5 7.1L1068.5 14.0L1080.5 7.1M1080.5 7.1L1092.5 0.1L1104.5 7.1M1080.5 20.9L1092.5 27.9L1104.5 20.9M1080.5 7.1L1092.5 14.0L1104.5 7.1M1104.5 7.1L1116.5 0.1L1128.5 7.1M1104.5 20.9L1116.5 27.9L1128.5 20.9M1104.5 7.1L1116.5 14.0L1128.5 7.1M1128.5 7.1L1140.5 0.1L1152.5 7.1M1128.5 20.9L1140.5 27.9L1152.5 20.9M1128.5 7.1L1140.5 14.0L1152.5 7.1M1152.5 7.1L1164.5 0.1L1176.5 7.1M1152.5 20.9L1164.5 27.9L1176.5 20.9M1152.5 7.1L1164.5 14.0L1176.5 7.1M1176.5 7.1L1188.5 0.1L1200.5 7.1M1176.5 20.9L1188.5 27.9L1200.5 20.9M1176.5 7.1L1188.5 14.0L1200.5 7.1M1200.5 7.1L1212.5 0.1L1224.5 7.1M1200.5 20.9L1212.5 27.9L1224.5 20.9M1200.5 7.1L1212.5 14.0L1224.5 7.1M1224.5 7.1L1236.5 0.1L1248.5 7.1M1224.5 20.9L1236.5 27.9L1248.5 20.9M1224.5 7.1L1236.5 14.0L1248.5 7.1M1248.5 7.1L1260.5 0.1L1272.5 7.1M1248.5 20.9L1260.5 27.9L1272.5 20.9M1248.5 7.1L1260.5 14.0L1272.5 7.1M1272.5 7.1L1284.5 0.1L1296.5 7.1M1272.5 20.9L1284.5 27.9L1296.5 20.9M1272.5 7.1L1284.5 14.0L1296.5 7.1M1296.5 7.1L1308.5 0.1L1320.5 7.1M1296.5 20.9L1308.5 27.9L1320.5 20.9M1296.5 7.1L1308.5 14.0L1320.5 7.1M1320.5 7.1L1332.5 0.1L1344.5 7.1M1320.5 20.9L1332.5 27.9L1344.5 20.9M1320.5 7.1L1332.5 14.0L1344.5 7.1M1344.5 7.1L1356.5 0.1L1368.5 7.1M1344.5 20.9L1356.5 27.9L1368.5 20.9M1344.5 7.1L1356.5 14.0L1368.5 7.1M1368.5 7.1L1380.5 0.1L1392.5 7.1M1368.5 20.9L1380.5 27.9L1392.5 20.9M1368.5 7.1L1380.5 14.0L1392.5 7.1M-35.5 27.9L-23.5 20.9L-11.5 27.9M-35.5 41.7L-23.5 48.6L-11.5 41.7M-35.5 27.9L-23.5 34.8L-11.5 27.9M-11.5 27.9L0.5 20.9L12.5 27.9M-11.5 41.7L0.5 48.6L12.5 41.7M-11.5 27.9L0.5 34.8L12.5 27.9M12.5 27.9L24.5 20.9L36.5 27.9M12.5 41.7L24.5 48.6L36.5 41.7M12.5 27.9L24.5 34.8L36.5 27.9M36.5 27.9L48.5 20.9L60.5 27.9M36.5 41.7L48.5 48.6L60.5 41.7M36.5 27.9L48.5 34.8L60.5 27.9M60.5 27.9L72.5 20.9L84.5 27.9M60.5 41.7L72.5 48.6L84.5 41.7M60.5 27.9L72.5 34.8L84.5 27.9M84.5 27.9L96.5 20.9L108.5 27.9M84.5 41.7L96.5 48.6L108.5 41.7M84.5 27.9L96.5 34.8L108.5 27.9M108.5 27.9L120.5 20.9L132.5 27.9M108.5 41.7L120.5 48.6L132.5 41.7M108.5 27.9L120.5 34.8L132.5 27.9M132.5 27.9L144.5 20.9L156.5 27.9M132.5 41.7L144.5 48.6L156.5 41.7M132.5 27.9L144.5 34.8L156.5 27.9M156.5 27.9L168.5 20.9L180.5 27.9M156.5 41.7L168.5 48.6L180.5 41.7M156.5 27.9L168.5 34.8L180.5 27.9M180.5 27.9L192.5 20.9L204.5 27.9M180.5 41.7L192.5 48.6L204.5 41.7M180.5 27.9L192.5 34.8L204.5 27.9M204.5 27.9L216.5 20.9L228.5 27.9M204.5 41.7L216.5 48.6L228.5 41.7M204.5 27.9L216.5 34.8L228.5 27.9M228.5 27.9L240.5 20.9L252.5 27.9M228.5 41.7L240.5 48.6L252.5 41.7M228.5 27.9L240.5 34.8L252.5 27.9M252.5 27.9L264.5 20.9L276.5 27.9M252.5 41.7L264.5 48.6L276.5 41.7M252.5 27.9L264.5 34.8L276.5 27.9M276.5 27.9L288.5 20.9L300.5 27.9M276.5 41.7L288.5 48.6L300.5 41.7M276.5 27.9L288.5 34.8L300.5 27.9M300.5 27.9L312.5 20.9L324.5 27.9M300.5 41.7L312.5 48.6L324.5 41.7M300.5 27.9L312.5 34.8L324.5 27.9M324.5 27.9L336.5 20.9L348.5 27.9M324.5 41.7L336.5 48.6L348.5 41.7M324.5 27.9L336.5 34.8L348.5 27.9M348.5 27.9L360.5 20.9L372.5 27.9M348.5 41.7L360.5 48.6L372.5 41.7M348.5 27.9L360.5 34.8L372.5 27.9M372.5 27.9L384.5 20.9L396.5 27.9M372.5 41.7L384.5 48.6L396.5 41.7M372.5 27.9L384.5 34.8L396.5 27.9M396.5 27.9L408.5 20.9L420.5 27.9M396.5 41.7L408.5 48.6L420.5 41.7M396.5 27.9L408.5 34.8L420.5 27.9M420.5 27.9L432.5 20.9L444.5 27.9M420.5 41.7L432.5 48.6L444.5 41.7M420.5 27.9L432.5 34.8L444.5 27.9M444.5 27.9L456.5 20.9L468.5 27.9M444.5 41.7L456.5 48.6L468.5 41.7M444.5 27.9L456.5 34.8L468.5 27.9M468.5 27.9L480.5 20.9L492.5 27.9M468.5 41.7L480.5 48.6L492.5 41.7M468.5 27.9L480.5 34.8L492.5 27.9M492.5 27.9L504.5 20.9L516.5 27.9M492.5 41.7L504.5 48.6L516.5 41.7M492.5 27.9L504.5 34.8L516.5 27.9M516.5 27.9L528.5 20.9L540.5 27.9M516.5 41.7L528.5 48.6L540.5 41.7M516.5 27.9L528.5 34.8L540.5 27.9M540.5 27.9L552.5 20.9L564.5 27.9M540.5 41.7L552.5 48.6L564.5 41.7M540.5 27.9L552.5 34.8L564.5 27.9M564.5 27.9L576.5 20.9L588.5 27.9M564.5 41.7L576.5 48.6L588.5 41.7M564.5 27.9L576.5 34.8L588.5 27.9M588.5 27.9L600.5 20.9L612.5 27.9M588.5 41.7L600.5 48.6L612.5 41.7M588.5 27.9L600.5 34.8L612.5 27.9M612.5 27.9L624.5 20.9L636.5 27.9M612.5 41.7L624.5 48.6L636.5 41.7M612.5 27.9L624.5 34.8L636.5 27.9M636.5 27.9L648.5 20.9L660.5 27.9M636.5 41.7L648.5 48.6L660.5 41.7M636.5 27.9L648.5 34.8L660.5 27.9M660.5 27.9L672.5 20.9L684.5 27.9M660.5 41.7L672.5 48.6L684.5 41.7M660.5 27.9L672.5 34.8L684.5 27.9M684.5 27.9L696.5 20.9L708.5 27.9M684.5 41.7L696.5 48.6L708.5 41.7M684.5 27.9L696.5 34.8L708.5 27.9M708.5 27.9L720.5 20.9L732.5 27.9M708.5 41.7L720.5 48.6L732.5 41.7M708.5 27.9L720.5 34.8L732.5 27.9M732.5 27.9L744.5 20.9L756.5 27.9M732.5 41.7L744.5 48.6L756.5 41.7M732.5 27.9L744.5 34.8L756.5 27.9M756.5 27.9L768.5 20.9L780.5 27.9M756.5 41.7L768.5 48.6L780.5 41.7M756.5 27.9L768.5 34.8L780.5 27.9M780.5 27.9L792.5 20.9L804.5 27.9M780.5 41.7L792.5 48.6L804.5 41.7M780.5 27.9L792.5 34.8L804.5 27.9M804.5 27.9L816.5 20.9L828.5 27.9M804.5 41.7L816.5 48.6L828.5 41.7M804.5 27.9L816.5 34.8L828.5 27.9M828.5 27.9L840.5 20.9L852.5 27.9M828.5 41.7L840.5 48.6L852.5 41.7M828.5 27.9L840.5 34.8L852.5 27.9M852.5 27.9L864.5 20.9L876.5 27.9M852.5 41.7L864.5 48.6L876.5 41.7M852.5 27.9L864.5 34.8L876.5 27.9M876.5 27.9L888.5 20.9L900.5 27.9M876.5 41.7L888.5 48.6L900.5 41.7M876.5 27.9L888.5 34.8L900.5 27.9M900.5 27.9L912.5 20.9L924.5 27.9M900.5 41.7L912.5 48.6L924.5 41.7M900.5 27.9L912.5 34.8L924.5 27.9M924.5 27.9L936.5 20.9L948.5 27.9M924.5 41.7L936.5 48.6L948.5 41.7M924.5 27.9L936.5 34.8L948.5 27.9M948.5 27.9L960.5 20.9L972.5 27.9M948.5 41.7L960.5 48.6L972.5 41.7M948.5 27.9L960.5 34.8L972.5 27.9M972.5 27.9L984.5 20.9L996.5 27.9M972.5 41.7L984.5 48.6L996.5 41.7M972.5 27.9L984.5 34.8L996.5 27.9M996.5 27.9L1008.5 20.9L1020.5 27.9M996.5 41.7L1008.5 48.6L1020.5 41.7M996.5 27.9L1008.5 34.8L1020.5 27.9M1020.5 27.9L1032.5 20.9L1044.5 27.9M1020.5 41.7L1032.5 48.6L1044.5 41.7M1020.5 27.9L1032.5 34.8L1044.5 27.9M1044.5 27.9L1056.5 20.9L1068.5 27.9M1044.5 41.7L1056.5 48.6L1068.5 41.7M1044.5 27.9L1056.5 34.8L1068.5 27.9M1068.5 27.9L1080.5 20.9L1092.5 27.9M1068.5 41.7L1080.5 48.6L1092.5 41.7M1068.5 27.9L1080.5 34.8L1092.5 27.9M1092.5 27.9L1104.5 20.9L1116.5 27.9M1092.5 41.7L1104.5 48.6L1116.5 41.7M1092.5 27.9L1104.5 34.8L1116.5 27.9M1116.5 27.9L1128.5 20.9L1140.5 27.9M1116.5 41.7L1128.5 48.6L1140.5 41.7M1116.5 27.9L1128.5 34.8L1140.5 27.9M1140.5 27.9L1152.5 20.9L1164.5 27.9M1140.5 41.7L1152.5 48.6L1164.5 41.7M1140.5 27.9L1152.5 34.8L1164.5 27.9M1164.5 27.9L1176.5 20.9L1188.5 27.9M1164.5 41.7L1176.5 48.6L1188.5 41.7M1164.5 27.9L1176.5 34.8L1188.5 27.9M1188.5 27.9L1200.5 20.9L1212.5 27.9M1188.5 41.7L1200.5 48.6L1212.5 41.7M1188.5 27.9L1200.5 34.8L1212.5 27.9M1212.5 27.9L1224.5 20.9L1236.5 27.9M1212.5 41.7L1224.5 48.6L1236.5 41.7M1212.5 27.9L1224.5 34.8L1236.5 27.9M1236.5 27.9L1248.5 20.9L1260.5 27.9M1236.5 41.7L1248.5 48.6L1260.5 41.7M1236.5 27.9L1248.5 34.8L1260.5 27.9M1260.5 27.9L1272.5 20.9L1284.5 27.9M1260.5 41.7L1272.5 48.6L1284.5 41.7M1260.5 27.9L1272.5 34.8L1284.5 27.9M1284.5 27.9L1296.5 20.9L1308.5 27.9M1284.5 41.7L1296.5 48.6L1308.5 41.7M1284.5 27.9L1296.5 34.8L1308.5 27.9M1308.5 27.9L1320.5 20.9L1332.5 27.9M1308.5 41.7L1320.5 48.6L1332.5 41.7M1308.5 27.9L1320.5 34.8L1332.5 27.9M1332.5 27.9L1344.5 20.9L1356.5 27.9M1332.5 41.7L1344.5 48.6L1356.5 41.7M1332.5 27.9L1344.5 34.8L1356.5 27.9M1356.5 27.9L1368.5 20.9L1380.5 27.9M1356.5 41.7L1368.5 48.6L1380.5 41.7M1356.5 27.9L1368.5 34.8L1380.5 27.9M1380.5 27.9L1392.5 20.9L1404.5 27.9M1380.5 41.7L1392.5 48.6L1404.5 41.7M1380.5 27.9L1392.5 34.8L1404.5 27.9M-23.5 48.6L-11.5 41.7L0.5 48.6M-23.5 62.5L-11.5 69.4L0.5 62.5M-23.5 48.6L-11.5 55.6L0.5 48.6M0.5 48.6L12.5 41.7L24.5 48.6M0.5 62.5L12.5 69.4L24.5 62.5M0.5 48.6L12.5 55.6L24.5 48.6M24.5 48.6L36.5 41.7L48.5 48.6M24.5 62.5L36.5 69.4L48.5 62.5M24.5 48.6L36.5 55.6L48.5 48.6M48.5 48.6L60.5 41.7L72.5 48.6M48.5 62.5L60.5 69.4L72.5 62.5M48.5 48.6L60.5 55.6L72.5 48.6M72.5 48.6L84.5 41.7L96.5 48.6M72.5 62.5L84.5 69.4L96.5 62.5M72.5 48.6L84.5 55.6L96.5 48.6M96.5 48.6L108.5 41.7L120.5 48.6M96.5 62.5L108.5 69.4L120.5 62.5M96.5 48.6L108.5 55.6L120.5 48.6M120.5 48.6L132.5 41.7L144.5 48.6M120.5 62.5L132.5 69.4L144.5 62.5M120.5 48.6L132.5 55.6L144.5 48.6M144.5 48.6L156.5 41.7L168.5 48.6M144.5 62.5L156.5 69.4L168.5 62.5M144.5 48.6L156.5 55.6L168.5 48.6M168.5 48.6L180.5 41.7L192.5 48.6M168.5 62.5L180.5 69.4L192.5 62.5M168.5 48.6L180.5 55.6L192.5 48.6M192.5 48.6L204.5 41.7L216.5 48.6M192.5 62.5L204.5 69.4L216.5 62.5M192.5 48.6L204.5 55.6L216.5 48.6M216.5 48.6L228.5 41.7L240.5 48.6M216.5 62.5L228.5 69.4L240.5 62.5M216.5 48.6L228.5 55.6L240.5 48.6M240.5 48.6L252.5 41.7L264.5 48.6M240.5 62.5L252.5 69.4L264.5 62.5M240.5 48.6L252.5 55.6L264.5 48.6M264.5 48.6L276.5 41.7L288.5 48.6M264.5 62.5L276.5 69.4L288.5 62.5M264.5 48.6L276.5 55.6L288.5 48.6M288.5 48.6L300.5 41.7L312.5 48.6M288.5 62.5L300.5 69.4L312.5 62.5M288.5 48.6L300.5 55.6L312.5 48.6M312.5 48.6L324.5 41.7L336.5 48.6M312.5 62.5L324.5 69.4L336.5 62.5M312.5 48.6L324.5 55.6L336.5 48.6M336.5 48.6L348.5 41.7L360.5 48.6M336.5 62.5L348.5 69.4L360.5 62.5M336.5 48.6L348.5 55.6L360.5 48.6M360.5 48.6L372.5 41.7L384.5 48.6M360.5 62.5L372.5 69.4L384.5 62.5M360.5 48.6L372.5 55.6L384.5 48.6M384.5 48.6L396.5 41.7L408.5 48.6M384.5 62.5L396.5 69.4L408.5 62.5M384.5 48.6L396.5 55.6L408.5 48.6M408.5 48.6L420.5 41.7L432.5 48.6M408.5 62.5L420.5 69.4L432.5 62.5M408.5 48.6L420.5 55.6L432.5 48.6M432.5 48.6L444.5 41.7L456.5 48.6M432.5 62.5L444.5 69.4L456.5 62.5M432.5 48.6L444.5 55.6L456.5 48.6M456.5 48.6L468.5 41.7L480.5 48.6M456.5 62.5L468.5 69.4L480.5 62.5M456.5 48.6L468.5 55.6L480.5 48.6M480.5 48.6L492.5 41.7L504.5 48.6M480.5 62.5L492.5 69.4L504.5 62.5M480.5 48.6L492.5 55.6L504.5 48.6M504.5 48.6L516.5 41.7L528.5 48.6M504.5 62.5L516.5 69.4L528.5 62.5M504.5 48.6L516.5 55.6L528.5 48.6M528.5 48.6L540.5 41.7L552.5 48.6M528.5 62.5L540.5 69.4L552.5 62.5M528.5 48.6L540.5 55.6L552.5 48.6M552.5 48.6L564.5 41.7L576.5 48.6M552.5 62.5L564.5 69.4L576.5 62.5M552.5 48.6L564.5 55.6L576.5 48.6M576.5 48.6L588.5 41.7L600.5 48.6M576.5 62.5L588.5 69.4L600.5 62.5M576.5 48.6L588.5 55.6L600.5 48.6M600.5 48.6L612.5 41.7L624.5 48.6M600.5 62.5L612.5 69.4L624.5 62.5M600.5 48.6L612.5 55.6L624.5 48.6M624.5 48.6L636.5 41.7L648.5 48.6M624.5 62.5L636.5 69.4L648.5 62.5M624.5 48.6L636.5 55.6L648.5 48.6M648.5 48.6L660.5 41.7L672.5 48.6M648.5 62.5L660.5 69.4L672.5 62.5M648.5 48.6L660.5 55.6L672.5 48.6M672.5 48.6L684.5 41.7L696.5 48.6M672.5 62.5L684.5 69.4L696.5 62.5M672.5 48.6L684.5 55.6L696.5 48.6M696.5 48.6L708.5 41.7L720.5 48.6M696.5 62.5L708.5 69.4L720.5 62.5M696.5 48.6L708.5 55.6L720.5 48.6M720.5 48.6L732.5 41.7L744.5 48.6M720.5 62.5L732.5 69.4L744.5 62.5M720.5 48.6L732.5 55.6L744.5 48.6M744.5 48.6L756.5 41.7L768.5 48.6M744.5 62.5L756.5 69.4L768.5 62.5M744.5 48.6L756.5 55.6L768.5 48.6M768.5 48.6L780.5 41.7L792.5 48.6M768.5 62.5L780.5 69.4L792.5 62.5M768.5 48.6L780.5 55.6L792.5 48.6M792.5 48.6L804.5 41.7L816.5 48.6M792.5 62.5L804.5 69.4L816.5 62.5M792.5 48.6L804.5 55.6L816.5 48.6M816.5 48.6L828.5 41.7L840.5 48.6M816.5 62.5L828.5 69.4L840.5 62.5M816.5 48.6L828.5 55.6L840.5 48.6M840.5 48.6L852.5 41.7L864.5 48.6M840.5 62.5L852.5 69.4L864.5 62.5M840.5 48.6L852.5 55.6L864.5 48.6M864.5 48.6L876.5 41.7L888.5 48.6M864.5 62.5L876.5 69.4L888.5 62.5M864.5 48.6L876.5 55.6L888.5 48.6M888.5 48.6L900.5 41.7L912.5 48.6M888.5 62.5L900.5 69.4L912.5 62.5M888.5 48.6L900.5 55.6L912.5 48.6M912.5 48.6L924.5 41.7L936.5 48.6M912.5 62.5L924.5 69.4L936.5 62.5M912.5 48.6L924.5 55.6L936.5 48.6M936.5 48.6L948.5 41.7L960.5 48.6M936.5 62.5L948.5 69.4L960.5 62.5M936.5 48.6L948.5 55.6L960.5 48.6M960.5 48.6L972.5 41.7L984.5 48.6M960.5 62.5L972.5 69.4L984.5 62.5M960.5 48.6L972.5 55.6L984.5 48.6M984.5 48.6L996.5 41.7L1008.5 48.6M984.5 62.5L996.5 69.4L1008.5 62.5M984.5 48.6L996.5 55.6L1008.5 48.6M1008.5 48.6L1020.5 41.7L1032.5 48.6M1008.5 62.5L1020.5 69.4L1032.5 62.5M1008.5 48.6L1020.5 55.6L1032.5 48.6M1032.5 48.6L1044.5 41.7L1056.5 48.6M1032.5 62.5L1044.5 69.4L1056.5 62.5M1032.5 48.6L1044.5 55.6L1056.5 48.6M1056.5 48.6L1068.5 41.7L1080.5 48.6M1056.5 62.5L1068.5 69.4L1080.5 62.5M1056.5 48.6L1068.5 55.6L1080.5 48.6M1080.5 48.6L1092.5 41.7L1104.5 48.6M1080.5 62.5L1092.5 69.4L1104.5 62.5M1080.5 48.6L1092.5 55.6L1104.5 48.6M1104.5 48.6L1116.5 41.7L1128.5 48.6M1104.5 62.5L1116.5 69.4L1128.5 62.5M1104.5 48.6L1116.5 55.6L1128.5 48.6M1128.5 48.6L1140.5 41.7L1152.5 48.6M1128.5 62.5L1140.5 69.4L1152.5 62.5M1128.5 48.6L1140.5 55.6L1152.5 48.6M1152.5 48.6L1164.5 41.7L1176.5 48.6M1152.5 62.5L1164.5 69.4L1176.5 62.5M1152.5 48.6L1164.5 55.6L1176.5 48.6M1176.5 48.6L1188.5 41.7L1200.5 48.6M1176.5 62.5L1188.5 69.4L1200.5 62.5M1176.5 48.6L1188.5 55.6L1200.5 48.6M1200.5 48.6L1212.5 41.7L1224.5 48.6M1200.5 62.5L1212.5 69.4L1224.5 62.5M1200.5 48.6L1212.5 55.6L1224.5 48.6M1224.5 48.6L1236.5 41.7L1248.5 48.6M1224.5 62.5L1236.5 69.4L1248.5 62.5M1224.5 48.6L1236.5 55.6L1248.5 48.6M1248.5 48.6L1260.5 41.7L1272.5 48.6M1248.5 62.5L1260.5 69.4L1272.5 62.5M1248.5 48.6L1260.5 55.6L1272.5 48.6M1272.5 48.6L1284.5 41.7L1296.5 48.6M1272.5 62.5L1284.5 69.4L1296.5 62.5M1272.5 48.6L1284.5 55.6L1296.5 48.6M1296.5 48.6L1308.5 41.7L1320.5 48.6M1296.5 62.5L1308.5 69.4L1320.5 62.5M1296.5 48.6L1308.5 55.6L1320.5 48.6M1320.5 48.6L1332.5 41.7L1344.5 48.6M1320.5 62.5L1332.5 69.4L1344.5 62.5M1320.5 48.6L1332.5 55.6L1344.5 48.6M1344.5 48.6L1356.5 41.7L1368.5 48.6M1344.5 62.5L1356.5 69.4L1368.5 62.5M1344.5 48.6L1356.5 55.6L1368.5 48.6M1368.5 48.6L1380.5 41.7L1392.5 48.6M1368.5 62.5L1380.5 69.4L1392.5 62.5M1368.5 48.6L1380.5 55.6L1392.5 48.6M-35.5 69.4L-23.5 62.5L-11.5 69.4M-35.5 83.3L-23.5 90.2L-11.5 83.3M-35.5 69.4L-23.5 76.3L-11.5 69.4M-11.5 69.4L0.5 62.5L12.5 69.4M-11.5 83.3L0.5 90.2L12.5 83.3M-11.5 69.4L0.5 76.3L12.5 69.4M12.5 69.4L24.5 62.5L36.5 69.4M12.5 83.3L24.5 90.2L36.5 83.3M12.5 69.4L24.5 76.3L36.5 69.4M36.5 69.4L48.5 62.5L60.5 69.4M36.5 83.3L48.5 90.2L60.5 83.3M36.5 69.4L48.5 76.3L60.5 69.4M60.5 69.4L72.5 62.5L84.5 69.4M60.5 83.3L72.5 90.2L84.5 83.3M60.5 69.4L72.5 76.3L84.5 69.4M84.5 69.4L96.5 62.5L108.5 69.4M84.5 83.3L96.5 90.2L108.5 83.3M84.5 69.4L96.5 76.3L108.5 69.4M108.5 69.4L120.5 62.5L132.5 69.4M108.5 83.3L120.5 90.2L132.5 83.3M108.5 69.4L120.5 76.3L132.5 69.4M132.5 69.4L144.5 62.5L156.5 69.4M132.5 83.3L144.5 90.2L156.5 83.3M132.5 69.4L144.5 76.3L156.5 69.4M156.5 69.4L168.5 62.5L180.5 69.4M156.5 83.3L168.5 90.2L180.5 83.3M156.5 69.4L168.5 76.3L180.5 69.4M180.5 69.4L192.5 62.5L204.5 69.4M180.5 83.3L192.5 90.2L204.5 83.3M180.5 69.4L192.5 76.3L204.5 69.4M204.5 69.4L216.5 62.5L228.5 69.4M204.5 83.3L216.5 90.2L228.5 83.3M204.5 69.4L216.5 76.3L228.5 69.4M228.5 69.4L240.5 62.5L252.5 69.4M228.5 83.3L240.5 90.2L252.5 83.3M228.5 69.4L240.5 76.3L252.5 69.4M252.5 69.4L264.5 62.5L276.5 69.4M252.5 83.3L264.5 90.2L276.5 83.3M252.5 69.4L264.5 76.3L276.5 69.4M276.5 69.4L288.5 62.5L300.5 69.4M276.5 83.3L288.5 90.2L300.5 83.3M276.5 69.4L288.5 76.3L300.5 69.4M300.5 69.4L312.5 62.5L324.5 69.4M300.5 83.3L312.5 90.2L324.5 83.3M300.5 69.4L312.5 76.3L324.5 69.4M324.5 69.4L336.5 62.5L348.5 69.4M324.5 83.3L336.5 90.2L348.5 83.3M324.5 69.4L336.5 76.3L348.5 69.4M348.5 69.4L360.5 62.5L372.5 69.4M348.5 83.3L360.5 90.2L372.5 83.3M348.5 69.4L360.5 76.3L372.5 69.4M372.5 69.4L384.5 62.5L396.5 69.4M372.5 83.3L384.5 90.2L396.5 83.3M372.5 69.4L384.5 76.3L396.5 69.4M396.5 69.4L408.5 62.5L420.5 69.4M396.5 83.3L408.5 90.2L420.5 83.3M396.5 69.4L408.5 76.3L420.5 69.4M420.5 69.4L432.5 62.5L444.5 69.4M420.5 83.3L432.5 90.2L444.5 83.3M420.5 69.4L432.5 76.3L444.5 69.4M444.5 69.4L456.5 62.5L468.5 69.4M444.5 83.3L456.5 90.2L468.5 83.3M444.5 69.4L456.5 76.3L468.5 69.4M468.5 69.4L480.5 62.5L492.5 69.4M468.5 83.3L480.5 90.2L492.5 83.3M468.5 69.4L480.5 76.3L492.5 69.4M492.5 69.4L504.5 62.5L516.5 69.4M492.5 83.3L504.5 90.2L516.5 83.3M492.5 69.4L504.5 76.3L516.5 69.4M516.5 69.4L528.5 62.5L540.5 69.4M516.5 83.3L528.5 90.2L540.5 83.3M516.5 69.4L528.5 76.3L540.5 69.4M540.5 69.4L552.5 62.5L564.5 69.4M540.5 83.3L552.5 90.2L564.5 83.3M540.5 69.4L552.5 76.3L564.5 69.4M564.5 69.4L576.5 62.5L588.5 69.4M564.5 83.3L576.5 90.2L588.5 83.3M564.5 69.4L576.5 76.3L588.5 69.4M588.5 69.4L600.5 62.5L612.5 69.4M588.5 83.3L600.5 90.2L612.5 83.3M588.5 69.4L600.5 76.3L612.5 69.4M612.5 69.4L624.5 62.5L636.5 69.4M612.5 83.3L624.5 90.2L636.5 83.3M612.5 69.4L624.5 76.3L636.5 69.4M636.5 69.4L648.5 62.5L660.5 69.4M636.5 83.3L648.5 90.2L660.5 83.3M636.5 69.4L648.5 76.3L660.5 69.4M660.5 69.4L672.5 62.5L684.5 69.4M660.5 83.3L672.5 90.2L684.5 83.3M660.5 69.4L672.5 76.3L684.5 69.4M684.5 69.4L696.5 62.5L708.5 69.4M684.5 83.3L696.5 90.2L708.5 83.3M684.5 69.4L696.5 76.3L708.5 69.4M708.5 69.4L720.5 62.5L732.5 69.4M708.5 83.3L720.5 90.2L732.5 83.3M708.5 69.4L720.5 76.3L732.5 69.4M732.5 69.4L744.5 62.5L756.5 69.4M732.5 83.3L744.5 90.2L756.5 83.3M732.5 69.4L744.5 76.3L756.5 69.4M756.5 69.4L768.5 62.5L780.5 69.4M756.5 83.3L768.5 90.2L780.5 83.3M756.5 69.4L768.5 76.3L780.5 69.4M780.5 69.4L792.5 62.5L804.5 69.4M780.5 83.3L792.5 90.2L804.5 83.3M780.5 69.4L792.5 76.3L804.5 69.4M804.5 69.4L816.5 62.5L828.5 69.4M804.5 83.3L816.5 90.2L828.5 83.3M804.5 69.4L816.5 76.3L828.5 69.4M828.5 69.4L840.5 62.5L852.5 69.4M828.5 83.3L840.5 90.2L852.5 83.3M828.5 69.4L840.5 76.3L852.5 69.4M852.5 69.4L864.5 62.5L876.5 69.4M852.5 83.3L864.5 90.2L876.5 83.3M852.5 69.4L864.5 76.3L876.5 69.4M876.5 69.4L888.5 62.5L900.5 69.4M876.5 83.3L888.5 90.2L900.5 83.3M876.5 69.4L888.5 76.3L900.5 69.4M900.5 69.4L912.5 62.5L924.5 69.4M900.5 83.3L912.5 90.2L924.5 83.3M900.5 69.4L912.5 76.3L924.5 69.4M924.5 69.4L936.5 62.5L948.5 69.4M924.5 83.3L936.5 90.2L948.5 83.3M924.5 69.4L936.5 76.3L948.5 69.4M948.5 69.4L960.5 62.5L972.5 69.4M948.5 83.3L960.5 90.2L972.5 83.3M948.5 69.4L960.5 76.3L972.5 69.4M972.5 69.4L984.5 62.5L996.5 69.4M972.5 83.3L984.5 90.2L996.5 83.3M972.5 69.4L984.5 76.3L996.5 69.4M996.5 69.4L1008.5 62.5L1020.5 69.4M996.5 83.3L1008.5 90.2L1020.5 83.3M996.5 69.4L1008.5 76.3L1020.5 69.4M1020.5 69.4L1032.5 62.5L1044.5 69.4M1020.5 83.3L1032.5 90.2L1044.5 83.3M1020.5 69.4L1032.5 76.3L1044.5 69.4M1044.5 69.4L1056.5 62.5L1068.5 69.4M1044.5 83.3L1056.5 90.2L1068.5 83.3M1044.5 69.4L1056.5 76.3L1068.5 69.4M1068.5 69.4L1080.5 62.5L1092.5 69.4M1068.5 83.3L1080.5 90.2L1092.5 83.3M1068.5 69.4L1080.5 76.3L1092.5 69.4M1092.5 69.4L1104.5 62.5L1116.5 69.4M1092.5 83.3L1104.5 90.2L1116.5 83.3M1092.5 69.4L1104.5 76.3L1116.5 69.4M1116.5 69.4L1128.5 62.5L1140.5 69.4M1116.5 83.3L1128.5 90.2L1140.5 83.3M1116.5 69.4L1128.5 76.3L1140.5 69.4M1140.5 69.4L1152.5 62.5L1164.5 69.4M1140.5 83.3L1152.5 90.2L1164.5 83.3M1140.5 69.4L1152.5 76.3L1164.5 69.4M1164.5 69.4L1176.5 62.5L1188.5 69.4M1164.5 83.3L1176.5 90.2L1188.5 83.3M1164.5 69.4L1176.5 76.3L1188.5 69.4M1188.5 69.4L1200.5 62.5L1212.5 69.4M1188.5 83.3L1200.5 90.2L1212.5 83.3M1188.5 69.4L1200.5 76.3L1212.5 69.4M1212.5 69.4L1224.5 62.5L1236.5 69.4M1212.5 83.3L1224.5 90.2L1236.5 83.3M1212.5 69.4L1224.5 76.3L1236.5 69.4M1236.5 69.4L1248.5 62.5L1260.5 69.4M1236.5 83.3L1248.5 90.2L1260.5 83.3M1236.5 69.4L1248.5 76.3L1260.5 69.4M1260.5 69.4L1272.5 62.5L1284.5 69.4M1260.5 83.3L1272.5 90.2L1284.5 83.3M1260.5 69.4L1272.5 76.3L1284.5 69.4M1284.5 69.4L1296.5 62.5L1308.5 69.4M1284.5 83.3L1296.5 90.2L1308.5 83.3M1284.5 69.4L1296.5 76.3L1308.5 69.4M1308.5 69.4L1320.5 62.5L1332.5 69.4M1308.5 83.3L1320.5 90.2L1332.5 83.3M1308.5 69.4L1320.5 76.3L1332.5 69.4M1332.5 69.4L1344.5 62.5L1356.5 69.4M1332.5 83.3L1344.5 90.2L1356.5 83.3M1332.5 69.4L1344.5 76.3L1356.5 69.4M1356.5 69.4L1368.5 62.5L1380.5 69.4M1356.5 83.3L1368.5 90.2L1380.5 83.3M1356.5 69.4L1368.5 76.3L1380.5 69.4M1380.5 69.4L1392.5 62.5L1404.5 69.4M1380.5 83.3L1392.5 90.2L1404.5 83.3M1380.5 69.4L1392.5 76.3L1404.5 69.4M-23.5 90.2L-11.5 83.3L0.5 90.2M-23.5 104.0L-11.5 111.0L0.5 104.0M-23.5 90.2L-11.5 97.1L0.5 90.2M0.5 90.2L12.5 83.3L24.5 90.2M0.5 104.0L12.5 111.0L24.5 104.0M0.5 90.2L12.5 97.1L24.5 90.2M24.5 90.2L36.5 83.3L48.5 90.2M24.5 104.0L36.5 111.0L48.5 104.0M24.5 90.2L36.5 97.1L48.5 90.2M48.5 90.2L60.5 83.3L72.5 90.2M48.5 104.0L60.5 111.0L72.5 104.0M48.5 90.2L60.5 97.1L72.5 90.2M72.5 90.2L84.5 83.3L96.5 90.2M72.5 104.0L84.5 111.0L96.5 104.0M72.5 90.2L84.5 97.1L96.5 90.2M96.5 90.2L108.5 83.3L120.5 90.2M96.5 104.0L108.5 111.0L120.5 104.0M96.5 90.2L108.5 97.1L120.5 90.2M120.5 90.2L132.5 83.3L144.5 90.2M120.5 104.0L132.5 111.0L144.5 104.0M120.5 90.2L132.5 97.1L144.5 90.2M144.5 90.2L156.5 83.3L168.5 90.2M144.5 104.0L156.5 111.0L168.5 104.0M144.5 90.2L156.5 97.1L168.5 90.2M168.5 90.2L180.5 83.3L192.5 90.2M168.5 104.0L180.5 111.0L192.5 104.0M168.5 90.2L180.5 97.1L192.5 90.2M192.5 90.2L204.5 83.3L216.5 90.2M192.5 104.0L204.5 111.0L216.5 104.0M192.5 90.2L204.5 97.1L216.5 90.2M216.5 90.2L228.5 83.3L240.5 90.2M216.5 104.0L228.5 111.0L240.5 104.0M216.5 90.2L228.5 97.1L240.5 90.2M240.5 90.2L252.5 83.3L264.5 90.2M240.5 104.0L252.5 111.0L264.5 104.0M240.5 90.2L252.5 97.1L264.5 90.2M264.5 90.2L276.5 83.3L288.5 90.2M264.5 104.0L276.5 111.0L288.5 104.0M264.5 90.2L276.5 97.1L288.5 90.2M288.5 90.2L300.5 83.3L312.5 90.2M288.5 104.0L300.5 111.0L312.5 104.0M288.5 90.2L300.5 97.1L312.5 90.2M312.5 90.2L324.5 83.3L336.5 90.2M312.5 104.0L324.5 111.0L336.5 104.0M312.5 90.2L324.5 97.1L336.5 90.2M336.5 90.2L348.5 83.3L360.5 90.2M336.5 104.0L348.5 111.0L360.5 104.0M336.5 90.2L348.5 97.1L360.5 90.2M360.5 90.2L372.5 83.3L384.5 90.2M360.5 104.0L372.5 111.0L384.5 104.0M360.5 90.2L372.5 97.1L384.5 90.2M384.5 90.2L396.5 83.3L408.5 90.2M384.5 104.0L396.5 111.0L408.5 104.0M384.5 90.2L396.5 97.1L408.5 90.2M408.5 90.2L420.5 83.3L432.5 90.2M408.5 104.0L420.5 111.0L432.5 104.0M408.5 90.2L420.5 97.1L432.5 90.2M432.5 90.2L444.5 83.3L456.5 90.2M432.5 104.0L444.5 111.0L456.5 104.0M432.5 90.2L444.5 97.1L456.5 90.2M456.5 90.2L468.5 83.3L480.5 90.2M456.5 104.0L468.5 111.0L480.5 104.0M456.5 90.2L468.5 97.1L480.5 90.2M480.5 90.2L492.5 83.3L504.5 90.2M480.5 104.0L492.5 111.0L504.5 104.0M480.5 90.2L492.5 97.1L504.5 90.2M504.5 90.2L516.5 83.3L528.5 90.2M504.5 104.0L516.5 111.0L528.5 104.0M504.5 90.2L516.5 97.1L528.5 90.2M528.5 90.2L540.5 83.3L552.5 90.2M528.5 104.0L540.5 111.0L552.5 104.0M528.5 90.2L540.5 97.1L552.5 90.2M552.5 90.2L564.5 83.3L576.5 90.2M552.5 104.0L564.5 111.0L576.5 104.0M552.5 90.2L564.5 97.1L576.5 90.2M576.5 90.2L588.5 83.3L600.5 90.2M576.5 104.0L588.5 111.0L600.5 104.0M576.5 90.2L588.5 97.1L600.5 90.2M600.5 90.2L612.5 83.3L624.5 90.2M600.5 104.0L612.5 111.0L624.5 104.0M600.5 90.2L612.5 97.1L624.5 90.2M624.5 90.2L636.5 83.3L648.5 90.2M624.5 104.0L636.5 111.0L648.5 104.0M624.5 90.2L636.5 97.1L648.5 90.2M648.5 90.2L660.5 83.3L672.5 90.2M648.5 104.0L660.5 111.0L672.5 104.0M648.5 90.2L660.5 97.1L672.5 90.2M672.5 90.2L684.5 83.3L696.5 90.2M672.5 104.0L684.5 111.0L696.5 104.0M672.5 90.2L684.5 97.1L696.5 90.2M696.5 90.2L708.5 83.3L720.5 90.2M696.5 104.0L708.5 111.0L720.5 104.0M696.5 90.2L708.5 97.1L720.5 90.2M720.5 90.2L732.5 83.3L744.5 90.2M720.5 104.0L732.5 111.0L744.5 104.0M720.5 90.2L732.5 97.1L744.5 90.2M744.5 90.2L756.5 83.3L768.5 90.2M744.5 104.0L756.5 111.0L768.5 104.0M744.5 90.2L756.5 97.1L768.5 90.2M768.5 90.2L780.5 83.3L792.5 90.2M768.5 104.0L780.5 111.0L792.5 104.0M768.5 90.2L780.5 97.1L792.5 90.2M792.5 90.2L804.5 83.3L816.5 90.2M792.5 104.0L804.5 111.0L816.5 104.0M792.5 90.2L804.5 97.1L816.5 90.2M816.5 90.2L828.5 83.3L840.5 90.2M816.5 104.0L828.5 111.0L840.5 104.0M816.5 90.2L828.5 97.1L840.5 90.2M840.5 90.2L852.5 83.3L864.5 90.2M840.5 104.0L852.5 111.0L864.5 104.0M840.5 90.2L852.5 97.1L864.5 90.2M864.5 90.2L876.5 83.3L888.5 90.2M864.5 104.0L876.5 111.0L888.5 104.0M864.5 90.2L876.5 97.1L888.5 90.2M888.5 90.2L900.5 83.3L912.5 90.2M888.5 104.0L900.5 111.0L912.5 104.0M888.5 90.2L900.5 97.1L912.5 90.2M912.5 90.2L924.5 83.3L936.5 90.2M912.5 104.0L924.5 111.0L936.5 104.0M912.5 90.2L924.5 97.1L936.5 90.2M936.5 90.2L948.5 83.3L960.5 90.2M936.5 104.0L948.5 111.0L960.5 104.0M936.5 90.2L948.5 97.1L960.5 90.2M960.5 90.2L972.5 83.3L984.5 90.2M960.5 104.0L972.5 111.0L984.5 104.0M960.5 90.2L972.5 97.1L984.5 90.2M984.5 90.2L996.5 83.3L1008.5 90.2M984.5 104.0L996.5 111.0L1008.5 104.0M984.5 90.2L996.5 97.1L1008.5 90.2M1008.5 90.2L1020.5 83.3L1032.5 90.2M1008.5 104.0L1020.5 111.0L1032.5 104.0M1008.5 90.2L1020.5 97.1L1032.5 90.2M1032.5 90.2L1044.5 83.3L1056.5 90.2M1032.5 104.0L1044.5 111.0L1056.5 104.0M1032.5 90.2L1044.5 97.1L1056.5 90.2M1056.5 90.2L1068.5 83.3L1080.5 90.2M1056.5 104.0L1068.5 111.0L1080.5 104.0M1056.5 90.2L1068.5 97.1L1080.5 90.2M1080.5 90.2L1092.5 83.3L1104.5 90.2M1080.5 104.0L1092.5 111.0L1104.5 104.0M1080.5 90.2L1092.5 97.1L1104.5 90.2M1104.5 90.2L1116.5 83.3L1128.5 90.2M1104.5 104.0L1116.5 111.0L1128.5 104.0M1104.5 90.2L1116.5 97.1L1128.5 90.2M1128.5 90.2L1140.5 83.3L1152.5 90.2M1128.5 104.0L1140.5 111.0L1152.5 104.0M1128.5 90.2L1140.5 97.1L1152.5 90.2M1152.5 90.2L1164.5 83.3L1176.5 90.2M1152.5 104.0L1164.5 111.0L1176.5 104.0M1152.5 90.2L1164.5 97.1L1176.5 90.2M1176.5 90.2L1188.5 83.3L1200.5 90.2M1176.5 104.0L1188.5 111.0L1200.5 104.0M1176.5 90.2L1188.5 97.1L1200.5 90.2M1200.5 90.2L1212.5 83.3L1224.5 90.2M1200.5 104.0L1212.5 111.0L1224.5 104.0M1200.5 90.2L1212.5 97.1L1224.5 90.2M1224.5 90.2L1236.5 83.3L1248.5 90.2M1224.5 104.0L1236.5 111.0L1248.5 104.0M1224.5 90.2L1236.5 97.1L1248.5 90.2M1248.5 90.2L1260.5 83.3L1272.5 90.2M1248.5 104.0L1260.5 111.0L1272.5 104.0M1248.5 90.2L1260.5 97.1L1272.5 90.2M1272.5 90.2L1284.5 83.3L1296.5 90.2M1272.5 104.0L1284.5 111.0L1296.5 104.0M1272.5 90.2L1284.5 97.1L1296.5 90.2M1296.5 90.2L1308.5 83.3L1320.5 90.2M1296.5 104.0L1308.5 111.0L1320.5 104.0M1296.5 90.2L1308.5 97.1L1320.5 90.2M1320.5 90.2L1332.5 83.3L1344.5 90.2M1320.5 104.0L1332.5 111.0L1344.5 104.0M1320.5 90.2L1332.5 97.1L1344.5 90.2M1344.5 90.2L1356.5 83.3L1368.5 90.2M1344.5 104.0L1356.5 111.0L1368.5 104.0M1344.5 90.2L1356.5 97.1L1368.5 90.2M1368.5 90.2L1380.5 83.3L1392.5 90.2M1368.5 104.0L1380.5 111.0L1392.5 104.0M1368.5 90.2L1380.5 97.1L1392.5 90.2M-35.5 111.0L-23.5 104.0L-11.5 111.0M-35.5 124.8L-23.5 131.8L-11.5 124.8M-35.5 111.0L-23.5 117.9L-11.5 111.0M-11.5 111.0L0.5 104.0L12.5 111.0M-11.5 124.8L0.5 131.8L12.5 124.8M-11.5 111.0L0.5 117.9L12.5 111.0M12.5 111.0L24.5 104.0L36.5 111.0M12.5 124.8L24.5 131.8L36.5 124.8M12.5 111.0L24.5 117.9L36.5 111.0M36.5 111.0L48.5 104.0L60.5 111.0M36.5 124.8L48.5 131.8L60.5 124.8M36.5 111.0L48.5 117.9L60.5 111.0M60.5 111.0L72.5 104.0L84.5 111.0M60.5 124.8L72.5 131.8L84.5 124.8M60.5 111.0L72.5 117.9L84.5 111.0M84.5 111.0L96.5 104.0L108.5 111.0M84.5 124.8L96.5 131.8L108.5 124.8M84.5 111.0L96.5 117.9L108.5 111.0M108.5 111.0L120.5 104.0L132.5 111.0M108.5 124.8L120.5 131.8L132.5 124.8M108.5 111.0L120.5 117.9L132.5 111.0M132.5 111.0L144.5 104.0L156.5 111.0M132.5 124.8L144.5 131.8L156.5 124.8M132.5 111.0L144.5 117.9L156.5 111.0M156.5 111.0L168.5 104.0L180.5 111.0M156.5 124.8L168.5 131.8L180.5 124.8M156.5 111.0L168.5 117.9L180.5 111.0M180.5 111.0L192.5 104.0L204.5 111.0M180.5 124.8L192.5 131.8L204.5 124.8M180.5 111.0L192.5 117.9L204.5 111.0M204.5 111.0L216.5 104.0L228.5 111.0M204.5 124.8L216.5 131.8L228.5 124.8M204.5 111.0L216.5 117.9L228.5 111.0M228.5 111.0L240.5 104.0L252.5 111.0M228.5 124.8L240.5 131.8L252.5 124.8M228.5 111.0L240.5 117.9L252.5 111.0M252.5 111.0L264.5 104.0L276.5 111.0M252.5 124.8L264.5 131.8L276.5 124.8M252.5 111.0L264.5 117.9L276.5 111.0M276.5 111.0L288.5 104.0L300.5 111.0M276.5 124.8L288.5 131.8L300.5 124.8M276.5 111.0L288.5 117.9L300.5 111.0M300.5 111.0L312.5 104.0L324.5 111.0M300.5 124.8L312.5 131.8L324.5 124.8M300.5 111.0L312.5 117.9L324.5 111.0M324.5 111.0L336.5 104.0L348.5 111.0M324.5 124.8L336.5 131.8L348.5 124.8M324.5 111.0L336.5 117.9L348.5 111.0M348.5 111.0L360.5 104.0L372.5 111.0M348.5 124.8L360.5 131.8L372.5 124.8M348.5 111.0L360.5 117.9L372.5 111.0M372.5 111.0L384.5 104.0L396.5 111.0M372.5 124.8L384.5 131.8L396.5 124.8M372.5 111.0L384.5 117.9L396.5 111.0M396.5 111.0L408.5 104.0L420.5 111.0M396.5 124.8L408.5 131.8L420.5 124.8M396.5 111.0L408.5 117.9L420.5 111.0M420.5 111.0L432.5 104.0L444.5 111.0M420.5 124.8L432.5 131.8L444.5 124.8M420.5 111.0L432.5 117.9L444.5 111.0M444.5 111.0L456.5 104.0L468.5 111.0M444.5 124.8L456.5 131.8L468.5 124.8M444.5 111.0L456.5 117.9L468.5 111.0M468.5 111.0L480.5 104.0L492.5 111.0M468.5 124.8L480.5 131.8L492.5 124.8M468.5 111.0L480.5 117.9L492.5 111.0M492.5 111.0L504.5 104.0L516.5 111.0M492.5 124.8L504.5 131.8L516.5 124.8M492.5 111.0L504.5 117.9L516.5 111.0M516.5 111.0L528.5 104.0L540.5 111.0M516.5 124.8L528.5 131.8L540.5 124.8M516.5 111.0L528.5 117.9L540.5 111.0M540.5 111.0L552.5 104.0L564.5 111.0M540.5 124.8L552.5 131.8L564.5 124.8M540.5 111.0L552.5 117.9L564.5 111.0M564.5 111.0L576.5 104.0L588.5 111.0M564.5 124.8L576.5 131.8L588.5 124.8M564.5 111.0L576.5 117.9L588.5 111.0M588.5 111.0L600.5 104.0L612.5 111.0M588.5 124.8L600.5 131.8L612.5 124.8M588.5 111.0L600.5 117.9L612.5 111.0M612.5 111.0L624.5 104.0L636.5 111.0M612.5 124.8L624.5 131.8L636.5 124.8M612.5 111.0L624.5 117.9L636.5 111.0M636.5 111.0L648.5 104.0L660.5 111.0M636.5 124.8L648.5 131.8L660.5 124.8M636.5 111.0L648.5 117.9L660.5 111.0M660.5 111.0L672.5 104.0L684.5 111.0M660.5 124.8L672.5 131.8L684.5 124.8M660.5 111.0L672.5 117.9L684.5 111.0M684.5 111.0L696.5 104.0L708.5 111.0M684.5 124.8L696.5 131.8L708.5 124.8M684.5 111.0L696.5 117.9L708.5 111.0M708.5 111.0L720.5 104.0L732.5 111.0M708.5 124.8L720.5 131.8L732.5 124.8M708.5 111.0L720.5 117.9L732.5 111.0M732.5 111.0L744.5 104.0L756.5 111.0M732.5 124.8L744.5 131.8L756.5 124.8M732.5 111.0L744.5 117.9L756.5 111.0M756.5 111.0L768.5 104.0L780.5 111.0M756.5 124.8L768.5 131.8L780.5 124.8M756.5 111.0L768.5 117.9L780.5 111.0M780.5 111.0L792.5 104.0L804.5 111.0M780.5 124.8L792.5 131.8L804.5 124.8M780.5 111.0L792.5 117.9L804.5 111.0M804.5 111.0L816.5 104.0L828.5 111.0M804.5 124.8L816.5 131.8L828.5 124.8M804.5 111.0L816.5 117.9L828.5 111.0M828.5 111.0L840.5 104.0L852.5 111.0M828.5 124.8L840.5 131.8L852.5 124.8M828.5 111.0L840.5 117.9L852.5 111.0M852.5 111.0L864.5 104.0L876.5 111.0M852.5 124.8L864.5 131.8L876.5 124.8M852.5 111.0L864.5 117.9L876.5 111.0M876.5 111.0L888.5 104.0L900.5 111.0M876.5 124.8L888.5 131.8L900.5 124.8M876.5 111.0L888.5 117.9L900.5 111.0M900.5 111.0L912.5 104.0L924.5 111.0M900.5 124.8L912.5 131.8L924.5 124.8M900.5 111.0L912.5 117.9L924.5 111.0M924.5 111.0L936.5 104.0L948.5 111.0M924.5 124.8L936.5 131.8L948.5 124.8M924.5 111.0L936.5 117.9L948.5 111.0M948.5 111.0L960.5 104.0L972.5 111.0M948.5 124.8L960.5 131.8L972.5 124.8M948.5 111.0L960.5 117.9L972.5 111.0M972.5 111.0L984.5 104.0L996.5 111.0M972.5 124.8L984.5 131.8L996.5 124.8M972.5 111.0L984.5 117.9L996.5 111.0M996.5 111.0L1008.5 104.0L1020.5 111.0M996.5 124.8L1008.5 131.8L1020.5 124.8M996.5 111.0L1008.5 117.9L1020.5 111.0M1020.5 111.0L1032.5 104.0L1044.5 111.0M1020.5 124.8L1032.5 131.8L1044.5 124.8M1020.5 111.0L1032.5 117.9L1044.5 111.0M1044.5 111.0L1056.5 104.0L1068.5 111.0M1044.5 124.8L1056.5 131.8L1068.5 124.8M1044.5 111.0L1056.5 117.9L1068.5 111.0M1068.5 111.0L1080.5 104.0L1092.5 111.0M1068.5 124.8L1080.5 131.8L1092.5 124.8M1068.5 111.0L1080.5 117.9L1092.5 111.0M1092.5 111.0L1104.5 104.0L1116.5 111.0M1092.5 124.8L1104.5 131.8L1116.5 124.8M1092.5 111.0L1104.5 117.9L1116.5 111.0M1116.5 111.0L1128.5 104.0L1140.5 111.0M1116.5 124.8L1128.5 131.8L1140.5 124.8M1116.5 111.0L1128.5 117.9L1140.5 111.0M1140.5 111.0L1152.5 104.0L1164.5 111.0M1140.5 124.8L1152.5 131.8L1164.5 124.8M1140.5 111.0L1152.5 117.9L1164.5 111.0M1164.5 111.0L1176.5 104.0L1188.5 111.0M1164.5 124.8L1176.5 131.8L1188.5 124.8M1164.5 111.0L1176.5 117.9L1188.5 111.0M1188.5 111.0L1200.5 104.0L1212.5 111.0M1188.5 124.8L1200.5 131.8L1212.5 124.8M1188.5 111.0L1200.5 117.9L1212.5 111.0M1212.5 111.0L1224.5 104.0L1236.5 111.0M1212.5 124.8L1224.5 131.8L1236.5 124.8M1212.5 111.0L1224.5 117.9L1236.5 111.0M1236.5 111.0L1248.5 104.0L1260.5 111.0M1236.5 124.8L1248.5 131.8L1260.5 124.8M1236.5 111.0L1248.5 117.9L1260.5 111.0M1260.5 111.0L1272.5 104.0L1284.5 111.0M1260.5 124.8L1272.5 131.8L1284.5 124.8M1260.5 111.0L1272.5 117.9L1284.5 111.0M1284.5 111.0L1296.5 104.0L1308.5 111.0M1284.5 124.8L1296.5 131.8L1308.5 124.8M1284.5 111.0L1296.5 117.9L1308.5 111.0M1308.5 111.0L1320.5 104.0L1332.5 111.0M1308.5 124.8L1320.5 131.8L1332.5 124.8M1308.5 111.0L1320.5 117.9L1332.5 111.0M1332.5 111.0L1344.5 104.0L1356.5 111.0M1332.5 124.8L1344.5 131.8L1356.5 124.8M1332.5 111.0L1344.5 117.9L1356.5 111.0M1356.5 111.0L1368.5 104.0L1380.5 111.0M1356.5 124.8L1368.5 131.8L1380.5 124.8M1356.5 111.0L1368.5 117.9L1380.5 111.0M1380.5 111.0L1392.5 104.0L1404.5 111.0M1380.5 124.8L1392.5 131.8L1404.5 124.8M1380.5 111.0L1392.5 117.9L1404.5 111.0M-23.5 131.8L-11.5 124.8L0.5 131.8M-23.5 145.6L-11.5 152.5L0.5 145.6M-23.5 131.8L-11.5 138.7L0.5 131.8M0.5 131.8L12.5 124.8L24.5 131.8M0.5 145.6L12.5 152.5L24.5 145.6M0.5 131.8L12.5 138.7L24.5 131.8M24.5 131.8L36.5 124.8L48.5 131.8M24.5 145.6L36.5 152.5L48.5 145.6M24.5 131.8L36.5 138.7L48.5 131.8M48.5 131.8L60.5 124.8L72.5 131.8M48.5 145.6L60.5 152.5L72.5 145.6M48.5 131.8L60.5 138.7L72.5 131.8M72.5 131.8L84.5 124.8L96.5 131.8M72.5 145.6L84.5 152.5L96.5 145.6M72.5 131.8L84.5 138.7L96.5 131.8M96.5 131.8L108.5 124.8L120.5 131.8M96.5 145.6L108.5 152.5L120.5 145.6M96.5 131.8L108.5 138.7L120.5 131.8M120.5 131.8L132.5 124.8L144.5 131.8M120.5 145.6L132.5 152.5L144.5 145.6M120.5 131.8L132.5 138.7L144.5 131.8M144.5 131.8L156.5 124.8L168.5 131.8M144.5 145.6L156.5 152.5L168.5 145.6M144.5 131.8L156.5 138.7L168.5 131.8M168.5 131.8L180.5 124.8L192.5 131.8M168.5 145.6L180.5 152.5L192.5 145.6M168.5 131.8L180.5 138.7L192.5 131.8M192.5 131.8L204.5 124.8L216.5 131.8M192.5 145.6L204.5 152.5L216.5 145.6M192.5 131.8L204.5 138.7L216.5 131.8M216.5 131.8L228.5 124.8L240.5 131.8M216.5 145.6L228.5 152.5L240.5 145.6M216.5 131.8L228.5 138.7L240.5 131.8M240.5 131.8L252.5 124.8L264.5 131.8M240.5 145.6L252.5 152.5L264.5 145.6M240.5 131.8L252.5 138.7L264.5 131.8M264.5 131.8L276.5 124.8L288.5 131.8M264.5 145.6L276.5 152.5L288.5 145.6M264.5 131.8L276.5 138.7L288.5 131.8M288.5 131.8L300.5 124.8L312.5 131.8M288.5 145.6L300.5 152.5L312.5 145.6M288.5 131.8L300.5 138.7L312.5 131.8M312.5 131.8L324.5 124.8L336.5 131.8M312.5 145.6L324.5 152.5L336.5 145.6M312.5 131.8L324.5 138.7L336.5 131.8M336.5 131.8L348.5 124.8L360.5 131.8M336.5 145.6L348.5 152.5L360.5 145.6M336.5 131.8L348.5 138.7L360.5 131.8M360.5 131.8L372.5 124.8L384.5 131.8M360.5 145.6L372.5 152.5L384.5 145.6M360.5 131.8L372.5 138.7L384.5 131.8M384.5 131.8L396.5 124.8L408.5 131.8M384.5 145.6L396.5 152.5L408.5 145.6M384.5 131.8L396.5 138.7L408.5 131.8M408.5 131.8L420.5 124.8L432.5 131.8M408.5 145.6L420.5 152.5L432.5 145.6M408.5 131.8L420.5 138.7L432.5 131.8M432.5 131.8L444.5 124.8L456.5 131.8M432.5 145.6L444.5 152.5L456.5 145.6M432.5 131.8L444.5 138.7L456.5 131.8M456.5 131.8L468.5 124.8L480.5 131.8M456.5 145.6L468.5 152.5L480.5 145.6M456.5 131.8L468.5 138.7L480.5 131.8M480.5 131.8L492.5 124.8L504.5 131.8M480.5 145.6L492.5 152.5L504.5 145.6M480.5 131.8L492.5 138.7L504.5 131.8M504.5 131.8L516.5 124.8L528.5 131.8M504.5 145.6L516.5 152.5L528.5 145.6M504.5 131.8L516.5 138.7L528.5 131.8M528.5 131.8L540.5 124.8L552.5 131.8M528.5 145.6L540.5 152.5L552.5 145.6M528.5 131.8L540.5 138.7L552.5 131.8M552.5 131.8L564.5 124.8L576.5 131.8M552.5 145.6L564.5 152.5L576.5 145.6M552.5 131.8L564.5 138.7L576.5 131.8M576.5 131.8L588.5 124.8L600.5 131.8M576.5 145.6L588.5 152.5L600.5 145.6M576.5 131.8L588.5 138.7L600.5 131.8M600.5 131.8L612.5 124.8L624.5 131.8M600.5 145.6L612.5 152.5L624.5 145.6M600.5 131.8L612.5 138.7L624.5 131.8M624.5 131.8L636.5 124.8L648.5 131.8M624.5 145.6L636.5 152.5L648.5 145.6M624.5 131.8L636.5 138.7L648.5 131.8M648.5 131.8L660.5 124.8L672.5 131.8M648.5 145.6L660.5 152.5L672.5 145.6M648.5 131.8L660.5 138.7L672.5 131.8M672.5 131.8L684.5 124.8L696.5 131.8M672.5 145.6L684.5 152.5L696.5 145.6M672.5 131.8L684.5 138.7L696.5 131.8M696.5 131.8L708.5 124.8L720.5 131.8M696.5 145.6L708.5 152.5L720.5 145.6M696.5 131.8L708.5 138.7L720.5 131.8M720.5 131.8L732.5 124.8L744.5 131.8M720.5 145.6L732.5 152.5L744.5 145.6M720.5 131.8L732.5 138.7L744.5 131.8M744.5 131.8L756.5 124.8L768.5 131.8M744.5 145.6L756.5 152.5L768.5 145.6M744.5 131.8L756.5 138.7L768.5 131.8M768.5 131.8L780.5 124.8L792.5 131.8M768.5 145.6L780.5 152.5L792.5 145.6M768.5 131.8L780.5 138.7L792.5 131.8M792.5 131.8L804.5 124.8L816.5 131.8M792.5 145.6L804.5 152.5L816.5 145.6M792.5 131.8L804.5 138.7L816.5 131.8M816.5 131.8L828.5 124.8L840.5 131.8M816.5 145.6L828.5 152.5L840.5 145.6M816.5 131.8L828.5 138.7L840.5 131.8M840.5 131.8L852.5 124.8L864.5 131.8M840.5 145.6L852.5 152.5L864.5 145.6M840.5 131.8L852.5 138.7L864.5 131.8M864.5 131.8L876.5 124.8L888.5 131.8M864.5 145.6L876.5 152.5L888.5 145.6M864.5 131.8L876.5 138.7L888.5 131.8M888.5 131.8L900.5 124.8L912.5 131.8M888.5 145.6L900.5 152.5L912.5 145.6M888.5 131.8L900.5 138.7L912.5 131.8M912.5 131.8L924.5 124.8L936.5 131.8M912.5 145.6L924.5 152.5L936.5 145.6M912.5 131.8L924.5 138.7L936.5 131.8M936.5 131.8L948.5 124.8L960.5 131.8M936.5 145.6L948.5 152.5L960.5 145.6M936.5 131.8L948.5 138.7L960.5 131.8M960.5 131.8L972.5 124.8L984.5 131.8M960.5 145.6L972.5 152.5L984.5 145.6M960.5 131.8L972.5 138.7L984.5 131.8M984.5 131.8L996.5 124.8L1008.5 131.8M984.5 145.6L996.5 152.5L1008.5 145.6M984.5 131.8L996.5 138.7L1008.5 131.8M1008.5 131.8L1020.5 124.8L1032.5 131.8M1008.5 145.6L1020.5 152.5L1032.5 145.6M1008.5 131.8L1020.5 138.7L1032.5 131.8M1032.5 131.8L1044.5 124.8L1056.5 131.8M1032.5 145.6L1044.5 152.5L1056.5 145.6M1032.5 131.8L1044.5 138.7L1056.5 131.8M1056.5 131.8L1068.5 124.8L1080.5 131.8M1056.5 145.6L1068.5 152.5L1080.5 145.6M1056.5 131.8L1068.5 138.7L1080.5 131.8M1080.5 131.8L1092.5 124.8L1104.5 131.8M1080.5 145.6L1092.5 152.5L1104.5 145.6M1080.5 131.8L1092.5 138.7L1104.5 131.8M1104.5 131.8L1116.5 124.8L1128.5 131.8M1104.5 145.6L1116.5 152.5L1128.5 145.6M1104.5 131.8L1116.5 138.7L1128.5 131.8M1128.5 131.8L1140.5 124.8L1152.5 131.8M1128.5 145.6L1140.5 152.5L1152.5 145.6M1128.5 131.8L1140.5 138.7L1152.5 131.8M1152.5 131.8L1164.5 124.8L1176.5 131.8M1152.5 145.6L1164.5 152.5L1176.5 145.6M1152.5 131.8L1164.5 138.7L1176.5 131.8M1176.5 131.8L1188.5 124.8L1200.5 131.8M1176.5 145.6L1188.5 152.5L1200.5 145.6M1176.5 131.8L1188.5 138.7L1200.5 131.8M1200.5 131.8L1212.5 124.8L1224.5 131.8M1200.5 145.6L1212.5 152.5L1224.5 145.6M1200.5 131.8L1212.5 138.7L1224.5 131.8M1224.5 131.8L1236.5 124.8L1248.5 131.8M1224.5 145.6L1236.5 152.5L1248.5 145.6M1224.5 131.8L1236.5 138.7L1248.5 131.8M1248.5 131.8L1260.5 124.8L1272.5 131.8M1248.5 145.6L1260.5 152.5L1272.5 145.6M1248.5 131.8L1260.5 138.7L1272.5 131.8M1272.5 131.8L1284.5 124.8L1296.5 131.8M1272.5 145.6L1284.5 152.5L1296.5 145.6M1272.5 131.8L1284.5 138.7L1296.5 131.8M1296.5 131.8L1308.5 124.8L1320.5 131.8M1296.5 145.6L1308.5 152.5L1320.5 145.6M1296.5 131.8L1308.5 138.7L1320.5 131.8M1320.5 131.8L1332.5 124.8L1344.5 131.8M1320.5 145.6L1332.5 152.5L1344.5 145.6M1320.5 131.8L1332.5 138.7L1344.5 131.8M1344.5 131.8L1356.5 124.8L1368.5 131.8M1344.5 145.6L1356.5 152.5L1368.5 145.6M1344.5 131.8L1356.5 138.7L1368.5 131.8M1368.5 131.8L1380.5 124.8L1392.5 131.8M1368.5 145.6L1380.5 152.5L1392.5 145.6M1368.5 131.8L1380.5 138.7L1392.5 131.8M-35.5 152.5L-23.5 145.6L-11.5 152.5M-35.5 166.4L-23.5 173.3L-11.5 166.4M-35.5 152.5L-23.5 159.5L-11.5 152.5M-11.5 152.5L0.5 145.6L12.5 152.5M-11.5 166.4L0.5 173.3L12.5 166.4M-11.5 152.5L0.5 159.5L12.5 152.5M12.5 152.5L24.5 145.6L36.5 152.5M12.5 166.4L24.5 173.3L36.5 166.4M12.5 152.5L24.5 159.5L36.5 152.5M36.5 152.5L48.5 145.6L60.5 152.5M36.5 166.4L48.5 173.3L60.5 166.4M36.5 152.5L48.5 159.5L60.5 152.5M60.5 152.5L72.5 145.6L84.5 152.5M60.5 166.4L72.5 173.3L84.5 166.4M60.5 152.5L72.5 159.5L84.5 152.5M84.5 152.5L96.5 145.6L108.5 152.5M84.5 166.4L96.5 173.3L108.5 166.4M84.5 152.5L96.5 159.5L108.5 152.5M108.5 152.5L120.5 145.6L132.5 152.5M108.5 166.4L120.5 173.3L132.5 166.4M108.5 152.5L120.5 159.5L132.5 152.5M132.5 152.5L144.5 145.6L156.5 152.5M132.5 166.4L144.5 173.3L156.5 166.4M132.5 152.5L144.5 159.5L156.5 152.5M156.5 152.5L168.5 145.6L180.5 152.5M156.5 166.4L168.5 173.3L180.5 166.4M156.5 152.5L168.5 159.5L180.5 152.5M180.5 152.5L192.5 145.6L204.5 152.5M180.5 166.4L192.5 173.3L204.5 166.4M180.5 152.5L192.5 159.5L204.5 152.5M204.5 152.5L216.5 145.6L228.5 152.5M204.5 166.4L216.5 173.3L228.5 166.4M204.5 152.5L216.5 159.5L228.5 152.5M228.5 152.5L240.5 145.6L252.5 152.5M228.5 166.4L240.5 173.3L252.5 166.4M228.5 152.5L240.5 159.5L252.5 152.5M252.5 152.5L264.5 145.6L276.5 152.5M252.5 166.4L264.5 173.3L276.5 166.4M252.5 152.5L264.5 159.5L276.5 152.5M276.5 152.5L288.5 145.6L300.5 152.5M276.5 166.4L288.5 173.3L300.5 166.4M276.5 152.5L288.5 159.5L300.5 152.5M300.5 152.5L312.5 145.6L324.5 152.5M300.5 166.4L312.5 173.3L324.5 166.4M300.5 152.5L312.5 159.5L324.5 152.5M324.5 152.5L336.5 145.6L348.5 152.5M324.5 166.4L336.5 173.3L348.5 166.4M324.5 152.5L336.5 159.5L348.5 152.5M348.5 152.5L360.5 145.6L372.5 152.5M348.5 166.4L360.5 173.3L372.5 166.4M348.5 152.5L360.5 159.5L372.5 152.5M372.5 152.5L384.5 145.6L396.5 152.5M372.5 166.4L384.5 173.3L396.5 166.4M372.5 152.5L384.5 159.5L396.5 152.5M396.5 152.5L408.5 145.6L420.5 152.5M396.5 166.4L408.5 173.3L420.5 166.4M396.5 152.5L408.5 159.5L420.5 152.5M420.5 152.5L432.5 145.6L444.5 152.5M420.5 166.4L432.5 173.3L444.5 166.4M420.5 152.5L432.5 159.5L444.5 152.5M444.5 152.5L456.5 145.6L468.5 152.5M444.5 166.4L456.5 173.3L468.5 166.4M444.5 152.5L456.5 159.5L468.5 152.5M468.5 152.5L480.5 145.6L492.5 152.5M468.5 166.4L480.5 173.3L492.5 166.4M468.5 152.5L480.5 159.5L492.5 152.5M492.5 152.5L504.5 145.6L516.5 152.5M492.5 166.4L504.5 173.3L516.5 166.4M492.5 152.5L504.5 159.5L516.5 152.5M516.5 152.5L528.5 145.6L540.5 152.5M516.5 166.4L528.5 173.3L540.5 166.4M516.5 152.5L528.5 159.5L540.5 152.5M540.5 152.5L552.5 145.6L564.5 152.5M540.5 166.4L552.5 173.3L564.5 166.4M540.5 152.5L552.5 159.5L564.5 152.5M564.5 152.5L576.5 145.6L588.5 152.5M564.5 166.4L576.5 173.3L588.5 166.4M564.5 152.5L576.5 159.5L588.5 152.5M588.5 152.5L600.5 145.6L612.5 152.5M588.5 166.4L600.5 173.3L612.5 166.4M588.5 152.5L600.5 159.5L612.5 152.5M612.5 152.5L624.5 145.6L636.5 152.5M612.5 166.4L624.5 173.3L636.5 166.4M612.5 152.5L624.5 159.5L636.5 152.5M636.5 152.5L648.5 145.6L660.5 152.5M636.5 166.4L648.5 173.3L660.5 166.4M636.5 152.5L648.5 159.5L660.5 152.5M660.5 152.5L672.5 145.6L684.5 152.5M660.5 166.4L672.5 173.3L684.5 166.4M660.5 152.5L672.5 159.5L684.5 152.5M684.5 152.5L696.5 145.6L708.5 152.5M684.5 166.4L696.5 173.3L708.5 166.4M684.5 152.5L696.5 159.5L708.5 152.5M708.5 152.5L720.5 145.6L732.5 152.5M708.5 166.4L720.5 173.3L732.5 166.4M708.5 152.5L720.5 159.5L732.5 152.5M732.5 152.5L744.5 145.6L756.5 152.5M732.5 166.4L744.5 173.3L756.5 166.4M732.5 152.5L744.5 159.5L756.5 152.5M756.5 152.5L768.5 145.6L780.5 152.5M756.5 166.4L768.5 173.3L780.5 166.4M756.5 152.5L768.5 159.5L780.5 152.5M780.5 152.5L792.5 145.6L804.5 152.5M780.5 166.4L792.5 173.3L804.5 166.4M780.5 152.5L792.5 159.5L804.5 152.5M804.5 152.5L816.5 145.6L828.5 152.5M804.5 166.4L816.5 173.3L828.5 166.4M804.5 152.5L816.5 159.5L828.5 152.5M828.5 152.5L840.5 145.6L852.5 152.5M828.5 166.4L840.5 173.3L852.5 166.4M828.5 152.5L840.5 159.5L852.5 152.5M852.5 152.5L864.5 145.6L876.5 152.5M852.5 166.4L864.5 173.3L876.5 166.4M852.5 152.5L864.5 159.5L876.5 152.5M876.5 152.5L888.5 145.6L900.5 152.5M876.5 166.4L888.5 173.3L900.5 166.4M876.5 152.5L888.5 159.5L900.5 152.5M900.5 152.5L912.5 145.6L924.5 152.5M900.5 166.4L912.5 173.3L924.5 166.4M900.5 152.5L912.5 159.5L924.5 152.5M924.5 152.5L936.5 145.6L948.5 152.5M924.5 166.4L936.5 173.3L948.5 166.4M924.5 152.5L936.5 159.5L948.5 152.5M948.5 152.5L960.5 145.6L972.5 152.5M948.5 166.4L960.5 173.3L972.5 166.4M948.5 152.5L960.5 159.5L972.5 152.5M972.5 152.5L984.5 145.6L996.5 152.5M972.5 166.4L984.5 173.3L996.5 166.4M972.5 152.5L984.5 159.5L996.5 152.5M996.5 152.5L1008.5 145.6L1020.5 152.5M996.5 166.4L1008.5 173.3L1020.5 166.4M996.5 152.5L1008.5 159.5L1020.5 152.5M1020.5 152.5L1032.5 145.6L1044.5 152.5M1020.5 166.4L1032.5 173.3L1044.5 166.4M1020.5 152.5L1032.5 159.5L1044.5 152.5M1044.5 152.5L1056.5 145.6L1068.5 152.5M1044.5 166.4L1056.5 173.3L1068.5 166.4M1044.5 152.5L1056.5 159.5L1068.5 152.5M1068.5 152.5L1080.5 145.6L1092.5 152.5M1068.5 166.4L1080.5 173.3L1092.5 166.4M1068.5 152.5L1080.5 159.5L1092.5 152.5M1092.5 152.5L1104.5 145.6L1116.5 152.5M1092.5 166.4L1104.5 173.3L1116.5 166.4M1092.5 152.5L1104.5 159.5L1116.5 152.5M1116.5 152.5L1128.5 145.6L1140.5 152.5M1116.5 166.4L1128.5 173.3L1140.5 166.4M1116.5 152.5L1128.5 159.5L1140.5 152.5M1140.5 152.5L1152.5 145.6L1164.5 152.5M1140.5 166.4L1152.5 173.3L1164.5 166.4M1140.5 152.5L1152.5 159.5L1164.5 152.5M1164.5 152.5L1176.5 145.6L1188.5 152.5M1164.5 166.4L1176.5 173.3L1188.5 166.4M1164.5 152.5L1176.5 159.5L1188.5 152.5M1188.5 152.5L1200.5 145.6L1212.5 152.5M1188.5 166.4L1200.5 173.3L1212.5 166.4M1188.5 152.5L1200.5 159.5L1212.5 152.5M1212.5 152.5L1224.5 145.6L1236.5 152.5M1212.5 166.4L1224.5 173.3L1236.5 166.4M1212.5 152.5L1224.5 159.5L1236.5 152.5M1236.5 152.5L1248.5 145.6L1260.5 152.5M1236.5 166.4L1248.5 173.3L1260.5 166.4M1236.5 152.5L1248.5 159.5L1260.5 152.5M1260.5 152.5L1272.5 145.6L1284.5 152.5M1260.5 166.4L1272.5 173.3L1284.5 166.4M1260.5 152.5L1272.5 159.5L1284.5 152.5M1284.5 152.5L1296.5 145.6L1308.5 152.5M1284.5 166.4L1296.5 173.3L1308.5 166.4M1284.5 152.5L1296.5 159.5L1308.5 152.5M1308.5 152.5L1320.5 145.6L1332.5 152.5M1308.5 166.4L1320.5 173.3L1332.5 166.4M1308.5 152.5L1320.5 159.5L1332.5 152.5M1332.5 152.5L1344.5 145.6L1356.5 152.5M1332.5 166.4L1344.5 173.3L1356.5 166.4M1332.5 152.5L1344.5 159.5L1356.5 152.5M1356.5 152.5L1368.5 145.6L1380.5 152.5M1356.5 166.4L1368.5 173.3L1380.5 166.4M1356.5 152.5L1368.5 159.5L1380.5 152.5M1380.5 152.5L1392.5 145.6L1404.5 152.5M1380.5 166.4L1392.5 173.3L1404.5 166.4M1380.5 152.5L1392.5 159.5L1404.5 152.5" fill="none" stroke="#ebebed" stroke-width="0.75"/><path d="M-23.5 -48.3V-34.5M-11.5 -55.3V-41.4M0.5 -48.3V-34.5M12.5 -55.3V-41.4M24.5 -48.3V-34.5M36.5 -55.3V-41.4M48.5 -48.3V-34.5M60.5 -55.3V-41.4M72.5 -48.3V-34.5M84.5 -55.3V-41.4M96.5 -48.3V-34.5M108.5 -55.3V-41.4M120.5 -48.3V-34.5M132.5 -55.3V-41.4M144.5 -48.3V-34.5M156.5 -55.3V-41.4M168.5 -48.3V-34.5M180.5 -55.3V-41.4M192.5 -48.3V-34.5M204.5 -55.3V-41.4M216.5 -48.3V-34.5M228.5 -55.3V-41.4M240.5 -48.3V-34.5M252.5 -55.3V-41.4M264.5 -48.3V-34.5M276.5 -55.3V-41.4M288.5 -48.3V-34.5M300.5 -55.3V-41.4M312.5 -48.3V-34.5M324.5 -55.3V-41.4M336.5 -48.3V-34.5M348.5 -55.3V-41.4M360.5 -48.3V-34.5M372.5 -55.3V-41.4M384.5 -48.3V-34.5M396.5 -55.3V-41.4M408.5 -48.3V-34.5M420.5 -55.3V-41.4M432.5 -48.3V-34.5M444.5 -55.3V-41.4M456.5 -48.3V-34.5M468.5 -55.3V-41.4M480.5 -48.3V-34.5M492.5 -55.3V-41.4M504.5 -48.3V-34.5M516.5 -55.3V-41.4M528.5 -48.3V-34.5M540.5 -55.3V-41.4M552.5 -48.3V-34.5M564.5 -55.3V-41.4M576.5 -48.3V-34.5M588.5 -55.3V-41.4M600.5 -48.3V-34.5M612.5 -55.3V-41.4M624.5 -48.3V-34.5M636.5 -55.3V-41.4M648.5 -48.3V-34.5M660.5 -55.3V-41.4M672.5 -48.3V-34.5M684.5 -55.3V-41.4M696.5 -48.3V-34.5M708.5 -55.3V-41.4M720.5 -48.3V-34.5M732.5 -55.3V-41.4M744.5 -48.3V-34.5M756.5 -55.3V-41.4M768.5 -48.3V-34.5M780.5 -55.3V-41.4M792.5 -48.3V-34.5M804.5 -55.3V-41.4M816.5 -48.3V-34.5M828.5 -55.3V-41.4M840.5 -48.3V-34.5M852.5 -55.3V-41.4M864.5 -48.3V-34.5M876.5 -55.3V-41.4M888.5 -48.3V-34.5M900.5 -55.3V-41.4M912.5 -48.3V-34.5M924.5 -55.3V-41.4M936.5 -48.3V-34.5M948.5 -55.3V-41.4M960.5 -48.3V-34.5M972.5 -55.3V-41.4M984.5 -48.3V-34.5M996.5 -55.3V-41.4M1008.5 -48.3V-34.5M1020.5 -55.3V-41.4M1032.5 -48.3V-34.5M1044.5 -55.3V-41.4M1056.5 -48.3V-34.5M1068.5 -55.3V-41.4M1080.5 -48.3V-34.5M1092.5 -55.3V-41.4M1104.5 -48.3V-34.5M1116.5 -55.3V-41.4M1128.5 -48.3V-34.5M1140.5 -55.3V-41.4M1152.5 -48.3V-34.5M1164.5 -55.3V-41.4M1176.5 -48.3V-34.5M1188.5 -55.3V-41.4M1200.5 -48.3V-34.5M1212.5 -55.3V-41.4M1224.5 -48.3V-34.5M1236.5 -55.3V-41.4M1248.5 -48.3V-34.5M1260.5 -55.3V-41.4M1272.5 -48.3V-34.5M1284.5 -55.3V-41.4M1296.5 -48.3V-34.5M1308.5 -55.3V-41.4M1320.5 -48.3V-34.5M1332.5 -55.3V-41.4M1344.5 -48.3V-34.5M1356.5 -55.3V-41.4M1368.5 -48.3V-34.5M1380.5 -55.3V-41.4M1392.5 -48.3V-34.5M1404.5 -55.3V-41.4M-11.5 -27.6V-13.7M0.5 -34.5V-20.6M12.5 -27.6V-13.7M24.5 -34.5V-20.6M36.5 -27.6V-13.7M48.5 -34.5V-20.6M60.5 -27.6V-13.7M72.5 -34.5V-20.6M84.5 -27.6V-13.7M96.5 -34.5V-20.6M108.5 -27.6V-13.7M120.5 -34.5V-20.6M132.5 -27.6V-13.7M144.5 -34.5V-20.6M156.5 -27.6V-13.7M168.5 -34.5V-20.6M180.5 -27.6V-13.7M192.5 -34.5V-20.6M204.5 -27.6V-13.7M216.5 -34.5V-20.6M228.5 -27.6V-13.7M240.5 -34.5V-20.6M252.5 -27.6V-13.7M264.5 -34.5V-20.6M276.5 -27.6V-13.7M288.5 -34.5V-20.6M300.5 -27.6V-13.7M312.5 -34.5V-20.6M324.5 -27.6V-13.7M336.5 -34.5V-20.6M348.5 -27.6V-13.7M360.5 -34.5V-20.6M372.5 -27.6V-13.7M384.5 -34.5V-20.6M396.5 -27.6V-13.7M408.5 -34.5V-20.6M420.5 -27.6V-13.7M432.5 -34.5V-20.6M444.5 -27.6V-13.7M456.5 -34.5V-20.6M468.5 -27.6V-13.7M480.5 -34.5V-20.6M492.5 -27.6V-13.7M504.5 -34.5V-20.6M516.5 -27.6V-13.7M528.5 -34.5V-20.6M540.5 -27.6V-13.7M552.5 -34.5V-20.6M564.5 -27.6V-13.7M576.5 -34.5V-20.6M588.5 -27.6V-13.7M600.5 -34.5V-20.6M612.5 -27.6V-13.7M624.5 -34.5V-20.6M636.5 -27.6V-13.7M648.5 -34.5V-20.6M660.5 -27.6V-13.7M672.5 -34.5V-20.6M684.5 -27.6V-13.7M696.5 -34.5V-20.6M708.5 -27.6V-13.7M720.5 -34.5V-20.6M732.5 -27.6V-13.7M744.5 -34.5V-20.6M756.5 -27.6V-13.7M768.5 -34.5V-20.6M780.5 -27.6V-13.7M792.5 -34.5V-20.6M804.5 -27.6V-13.7M816.5 -34.5V-20.6M828.5 -27.6V-13.7M840.5 -34.5V-20.6M852.5 -27.6V-13.7M864.5 -34.5V-20.6M876.5 -27.6V-13.7M888.5 -34.5V-20.6M900.5 -27.6V-13.7M912.5 -34.5V-20.6M924.5 -27.6V-13.7M936.5 -34.5V-20.6M948.5 -27.6V-13.7M960.5 -34.5V-20.6M972.5 -27.6V-13.7M984.5 -34.5V-20.6M996.5 -27.6V-13.7M1008.5 -34.5V-20.6M1020.5 -27.6V-13.7M1032.5 -34.5V-20.6M1044.5 -27.6V-13.7M1056.5 -34.5V-20.6M1068.5 -27.6V-13.7M1080.5 -34.5V-20.6M1092.5 -27.6V-13.7M1104.5 -34.5V-20.6M1116.5 -27.6V-13.7M1128.5 -34.5V-20.6M1140.5 -27.6V-13.7M1152.5 -34.5V-20.6M1164.5 -27.6V-13.7M1176.5 -34.5V-20.6M1188.5 -27.6V-13.7M1200.5 -34.5V-20.6M1212.5 -27.6V-13.7M1224.5 -34.5V-20.6M1236.5 -27.6V-13.7M1248.5 -34.5V-20.6M1260.5 -27.6V-13.7M1272.5 -34.5V-20.6M1284.5 -27.6V-13.7M1296.5 -34.5V-20.6M1308.5 -27.6V-13.7M1320.5 -34.5V-20.6M1332.5 -27.6V-13.7M1344.5 -34.5V-20.6M1356.5 -27.6V-13.7M1368.5 -34.5V-20.6M1380.5 -27.6V-13.7M1392.5 -34.5V-20.6M-23.5 -6.8V7.1M-11.5 -13.7V0.1M0.5 -6.8V7.1M12.5 -13.7V0.1M24.5 -6.8V7.1M36.5 -13.7V0.1M48.5 -6.8V7.1M60.5 -13.7V0.1M72.5 -6.8V7.1M84.5 -13.7V0.1M96.5 -6.8V7.1M108.5 -13.7V0.1M120.5 -6.8V7.1M132.5 -13.7V0.1M144.5 -6.8V7.1M156.5 -13.7V0.1M168.5 -6.8V7.1M180.5 -13.7V0.1M192.5 -6.8V7.1M204.5 -13.7V0.1M216.5 -6.8V7.1M228.5 -13.7V0.1M240.5 -6.8V7.1M252.5 -13.7V0.1M264.5 -6.8V7.1M276.5 -13.7V0.1M288.5 -6.8V7.1M300.5 -13.7V0.1M312.5 -6.8V7.1M324.5 -13.7V0.1M336.5 -6.8V7.1M348.5 -13.7V0.1M360.5 -6.8V7.1M372.5 -13.7V0.1M384.5 -6.8V7.1M396.5 -13.7V0.1M408.5 -6.8V7.1M420.5 -13.7V0.1M432.5 -6.8V7.1M444.5 -13.7V0.1M456.5 -6.8V7.1M468.5 -13.7V0.1M480.5 -6.8V7.1M492.5 -13.7V0.1M504.5 -6.8V7.1M516.5 -13.7V0.1M528.5 -6.8V7.1M540.5 -13.7V0.1M552.5 -6.8V7.1M564.5 -13.7V0.1M576.5 -6.8V7.1M588.5 -13.7V0.1M600.5 -6.8V7.1M612.5 -13.7V0.1M624.5 -6.8V7.1M636.5 -13.7V0.1M648.5 -6.8V7.1M660.5 -13.7V0.1M672.5 -6.8V7.1M684.5 -13.7V0.1M696.5 -6.8V7.1M708.5 -13.7V0.1M720.5 -6.8V7.1M732.5 -13.7V0.1M744.5 -6.8V7.1M756.5 -13.7V0.1M768.5 -6.8V7.1M780.5 -13.7V0.1M792.5 -6.8V7.1M804.5 -13.7V0.1M816.5 -6.8V7.1M828.5 -13.7V0.1M840.5 -6.8V7.1M852.5 -13.7V0.1M864.5 -6.8V7.1M876.5 -13.7V0.1M888.5 -6.8V7.1M900.5 -13.7V0.1M912.5 -6.8V7.1M924.5 -13.7V0.1M936.5 -6.8V7.1M948.5 -13.7V0.1M960.5 -6.8V7.1M972.5 -13.7V0.1M984.5 -6.8V7.1M996.5 -13.7V0.1M1008.5 -6.8V7.1M1020.5 -13.7V0.1M1032.5 -6.8V7.1M1044.5 -13.7V0.1M1056.5 -6.8V7.1M1068.5 -13.7V0.1M1080.5 -6.8V7.1M1092.5 -13.7V0.1M1104.5 -6.8V7.1M1116.5 -13.7V0.1M1128.5 -6.8V7.1M1140.5 -13.7V0.1M1152.5 -6.8V7.1M1164.5 -13.7V0.1M1176.5 -6.8V7.1M1188.5 -13.7V0.1M1200.5 -6.8V7.1M1212.5 -13.7V0.1M1224.5 -6.8V7.1M1236.5 -13.7V0.1M1248.5 -6.8V7.1M1260.5 -13.7V0.1M1272.5 -6.8V7.1M1284.5 -13.7V0.1M1296.5 -6.8V7.1M1308.5 -13.7V0.1M1320.5 -6.8V7.1M1332.5 -13.7V0.1M1344.5 -6.8V7.1M1356.5 -13.7V0.1M1368.5 -6.8V7.1M1380.5 -13.7V0.1M1392.5 -6.8V7.1M1404.5 -13.7V0.1M-11.5 14.0V27.9M0.5 7.1V20.9M12.5 14.0V27.9M24.5 7.1V20.9M36.5 14.0V27.9M48.5 7.1V20.9M60.5 14.0V27.9M72.5 7.1V20.9M84.5 14.0V27.9M96.5 7.1V20.9M108.5 14.0V27.9M120.5 7.1V20.9M132.5 14.0V27.9M144.5 7.1V20.9M156.5 14.0V27.9M168.5 7.1V20.9M180.5 14.0V27.9M192.5 7.1V20.9M204.5 14.0V27.9M216.5 7.1V20.9M228.5 14.0V27.9M240.5 7.1V20.9M252.5 14.0V27.9M264.5 7.1V20.9M276.5 14.0V27.9M288.5 7.1V20.9M300.5 14.0V27.9M312.5 7.1V20.9M324.5 14.0V27.9M336.5 7.1V20.9M348.5 14.0V27.9M360.5 7.1V20.9M372.5 14.0V27.9M384.5 7.1V20.9M396.5 14.0V27.9M408.5 7.1V20.9M420.5 14.0V27.9M432.5 7.1V20.9M444.5 14.0V27.9M456.5 7.1V20.9M468.5 14.0V27.9M480.5 7.1V20.9M492.5 14.0V27.9M504.5 7.1V20.9M516.5 14.0V27.9M528.5 7.1V20.9M540.5 14.0V27.9M552.5 7.1V20.9M564.5 14.0V27.9M576.5 7.1V20.9M588.5 14.0V27.9M600.5 7.1V20.9M612.5 14.0V27.9M624.5 7.1V20.9M636.5 14.0V27.9M648.5 7.1V20.9M660.5 14.0V27.9M672.5 7.1V20.9M684.5 14.0V27.9M696.5 7.1V20.9M708.5 14.0V27.9M720.5 7.1V20.9M732.5 14.0V27.9M744.5 7.1V20.9M756.5 14.0V27.9M768.5 7.1V20.9M780.5 14.0V27.9M792.5 7.1V20.9M804.5 14.0V27.9M816.5 7.1V20.9M828.5 14.0V27.9M840.5 7.1V20.9M852.5 14.0V27.9M864.5 7.1V20.9M876.5 14.0V27.9M888.5 7.1V20.9M900.5 14.0V27.9M912.5 7.1V20.9M924.5 14.0V27.9M936.5 7.1V20.9M948.5 14.0V27.9M960.5 7.1V20.9M972.5 14.0V27.9M984.5 7.1V20.9M996.5 14.0V27.9M1008.5 7.1V20.9M1020.5 14.0V27.9M1032.5 7.1V20.9M1044.5 14.0V27.9M1056.5 7.1V20.9M1068.5 14.0V27.9M1080.5 7.1V20.9M1092.5 14.0V27.9M1104.5 7.1V20.9M1116.5 14.0V27.9M1128.5 7.1V20.9M1140.5 14.0V27.9M1152.5 7.1V20.9M1164.5 14.0V27.9M1176.5 7.1V20.9M1188.5 14.0V27.9M1200.5 7.1V20.9M1212.5 14.0V27.9M1224.5 7.1V20.9M1236.5 14.0V27.9M1248.5 7.1V20.9M1260.5 14.0V27.9M1272.5 7.1V20.9M1284.5 14.0V27.9M1296.5 7.1V20.9M1308.5 14.0V27.9M1320.5 7.1V20.9M1332.5 14.0V27.9M1344.5 7.1V20.9M1356.5 14.0V27.9M1368.5 7.1V20.9M1380.5 14.0V27.9M1392.5 7.1V20.9M-23.5 34.8V48.6M-11.5 27.9V41.7M0.5 34.8V48.6M12.5 27.9V41.7M24.5 34.8V48.6M36.5 27.9V41.7M48.5 34.8V48.6M60.5 27.9V41.7M72.5 34.8V48.6M84.5 27.9V41.7M96.5 34.8V48.6M108.5 27.9V41.7M120.5 34.8V48.6M132.5 27.9V41.7M144.5 34.8V48.6M156.5 27.9V41.7M168.5 34.8V48.6M180.5 27.9V41.7M192.5 34.8V48.6M204.5 27.9V41.7M216.5 34.8V48.6M228.5 27.9V41.7M240.5 34.8V48.6M252.5 27.9V41.7M264.5 34.8V48.6M276.5 27.9V41.7M288.5 34.8V48.6M300.5 27.9V41.7M312.5 34.8V48.6M324.5 27.9V41.7M336.5 34.8V48.6M348.5 27.9V41.7M360.5 34.8V48.6M372.5 27.9V41.7M384.5 34.8V48.6M396.5 27.9V41.7M408.5 34.8V48.6M420.5 27.9V41.7M432.5 34.8V48.6M444.5 27.9V41.7M456.5 34.8V48.6M468.5 27.9V41.7M480.5 34.8V48.6M492.5 27.9V41.7M504.5 34.8V48.6M516.5 27.9V41.7M528.5 34.8V48.6M540.5 27.9V41.7M552.5 34.8V48.6M564.5 27.9V41.7M576.5 34.8V48.6M588.5 27.9V41.7M600.5 34.8V48.6M612.5 27.9V41.7M624.5 34.8V48.6M636.5 27.9V41.7M648.5 34.8V48.6M660.5 27.9V41.7M672.5 34.8V48.6M684.5 27.9V41.7M696.5 34.8V48.6M708.5 27.9V41.7M720.5 34.8V48.6M732.5 27.9V41.7M744.5 34.8V48.6M756.5 27.9V41.7M768.5 34.8V48.6M780.5 27.9V41.7M792.5 34.8V48.6M804.5 27.9V41.7M816.5 34.8V48.6M828.5 27.9V41.7M840.5 34.8V48.6M852.5 27.9V41.7M864.5 34.8V48.6M876.5 27.9V41.7M888.5 34.8V48.6M900.5 27.9V41.7M912.5 34.8V48.6M924.5 27.9V41.7M936.5 34.8V48.6M948.5 27.9V41.7M960.5 34.8V48.6M972.5 27.9V41.7M984.5 34.8V48.6M996.5 27.9V41.7M1008.5 34.8V48.6M1020.5 27.9V41.7M1032.5 34.8V48.6M1044.5 27.9V41.7M1056.5 34.8V48.6M1068.5 27.9V41.7M1080.5 34.8V48.6M1092.5 27.9V41.7M1104.5 34.8V48.6M1116.5 27.9V41.7M1128.5 34.8V48.6M1140.5 27.9V41.7M1152.5 34.8V48.6M1164.5 27.9V41.7M1176.5 34.8V48.6M1188.5 27.9V41.7M1200.5 34.8V48.6M1212.5 27.9V41.7M1224.5 34.8V48.6M1236.5 27.9V41.7M1248.5 34.8V48.6M1260.5 27.9V41.7M1272.5 34.8V48.6M1284.5 27.9V41.7M1296.5 34.8V48.6M1308.5 27.9V41.7M1320.5 34.8V48.6M1332.5 27.9V41.7M1344.5 34.8V48.6M1356.5 27.9V41.7M1368.5 34.8V48.6M1380.5 27.9V41.7M1392.5 34.8V48.6M1404.5 27.9V41.7M-11.5 55.6V69.4M0.5 48.6V62.5M12.5 55.6V69.4M24.5 48.6V62.5M36.5 55.6V69.4M48.5 48.6V62.5M60.5 55.6V69.4M72.5 48.6V62.5M84.5 55.6V69.4M96.5 48.6V62.5M108.5 55.6V69.4M120.5 48.6V62.5M132.5 55.6V69.4M144.5 48.6V62.5M156.5 55.6V69.4M168.5 48.6V62.5M180.5 55.6V69.4M192.5 48.6V62.5M204.5 55.6V69.4M216.5 48.6V62.5M228.5 55.6V69.4M240.5 48.6V62.5M252.5 55.6V69.4M264.5 48.6V62.5M276.5 55.6V69.4M288.5 48.6V62.5M300.5 55.6V69.4M312.5 48.6V62.5M324.5 55.6V69.4M336.5 48.6V62.5M348.5 55.6V69.4M360.5 48.6V62.5M372.5 55.6V69.4M384.5 48.6V62.5M396.5 55.6V69.4M408.5 48.6V62.5M420.5 55.6V69.4M432.5 48.6V62.5M444.5 55.6V69.4M456.5 48.6V62.5M468.5 55.6V69.4M480.5 48.6V62.5M492.5 55.6V69.4M504.5 48.6V62.5M516.5 55.6V69.4M528.5 48.6V62.5M540.5 55.6V69.4M552.5 48.6V62.5M564.5 55.6V69.4M576.5 48.6V62.5M588.5 55.6V69.4M600.5 48.6V62.5M612.5 55.6V69.4M624.5 48.6V62.5M636.5 55.6V69.4M648.5 48.6V62.5M660.5 55.6V69.4M672.5 48.6V62.5M684.5 55.6V69.4M696.5 48.6V62.5M708.5 55.6V69.4M720.5 48.6V62.5M732.5 55.6V69.4M744.5 48.6V62.5M756.5 55.6V69.4M768.5 48.6V62.5M780.5 55.6V69.4M792.5 48.6V62.5M804.5 55.6V69.4M816.5 48.6V62.5M828.5 55.6V69.4M840.5 48.6V62.5M852.5 55.6V69.4M864.5 48.6V62.5M876.5 55.6V69.4M888.5 48.6V62.5M900.5 55.6V69.4M912.5 48.6V62.5M924.5 55.6V69.4M936.5 48.6V62.5M948.5 55.6V69.4M960.5 48.6V62.5M972.5 55.6V69.4M984.5 48.6V62.5M996.5 55.6V69.4M1008.5 48.6V62.5M1020.5 55.6V69.4M1032.5 48.6V62.5M1044.5 55.6V69.4M1056.5 48.6V62.5M1068.5 55.6V69.4M1080.5 48.6V62.5M1092.5 55.6V69.4M1104.5 48.6V62.5M1116.5 55.6V69.4M1128.5 48.6V62.5M1140.5 55.6V69.4M1152.5 48.6V62.5M1164.5 55.6V69.4M1176.5 48.6V62.5M1188.5 55.6V69.4M1200.5 48.6V62.5M1212.5 55.6V69.4M1224.5 48.6V62.5M1236.5 55.6V69.4M1248.5 48.6V62.5M1260.5 55.6V69.4M1272.5 48.6V62.5M1284.5 55.6V69.4M1296.5 48.6V62.5M1308.5 55.6V69.4M1320.5 48.6V62.5M1332.5 55.6V69.4M1344.5 48.6V62.5M1356.5 55.6V69.4M1368.5 48.6V62.5M1380.5 55.6V69.4M1392.5 48.6V62.5M-23.5 76.3V90.2M-11.5 69.4V83.3M0.5 76.3V90.2M12.5 69.4V83.3M24.5 76.3V90.2M36.5 69.4V83.3M48.5 76.3V90.2M60.5 69.4V83.3M72.5 76.3V90.2M84.5 69.4V83.3M96.5 76.3V90.2M108.5 69.4V83.3M120.5 76.3V90.2M132.5 69.4V83.3M144.5 76.3V90.2M156.5 69.4V83.3M168.5 76.3V90.2M180.5 69.4V83.3M192.5 76.3V90.2M204.5 69.4V83.3M216.5 76.3V90.2M228.5 69.4V83.3M240.5 76.3V90.2M252.5 69.4V83.3M264.5 76.3V90.2M276.5 69.4V83.3M288.5 76.3V90.2M300.5 69.4V83.3M312.5 76.3V90.2M324.5 69.4V83.3M336.5 76.3V90.2M348.5 69.4V83.3M360.5 76.3V90.2M372.5 69.4V83.3M384.5 76.3V90.2M396.5 69.4V83.3M408.5 76.3V90.2M420.5 69.4V83.3M432.5 76.3V90.2M444.5 69.4V83.3M456.5 76.3V90.2M468.5 69.4V83.3M480.5 76.3V90.2M492.5 69.4V83.3M504.5 76.3V90.2M516.5 69.4V83.3M528.5 76.3V90.2M540.5 69.4V83.3M552.5 76.3V90.2M564.5 69.4V83.3M576.5 76.3V90.2M588.5 69.4V83.3M600.5 76.3V90.2M612.5 69.4V83.3M624.5 76.3V90.2M636.5 69.4V83.3M648.5 76.3V90.2M660.5 69.4V83.3M672.5 76.3V90.2M684.5 69.4V83.3M696.5 76.3V90.2M708.5 69.4V83.3M720.5 76.3V90.2M732.5 69.4V83.3M744.5 76.3V90.2M756.5 69.4V83.3M768.5 76.3V90.2M780.5 69.4V83.3M792.5 76.3V90.2M804.5 69.4V83.3M816.5 76.3V90.2M828.5 69.4V83.3M840.5 76.3V90.2M852.5 69.4V83.3M864.5 76.3V90.2M876.5 69.4V83.3M888.5 76.3V90.2M900.5 69.4V83.3M912.5 76.3V90.2M924.5 69.4V83.3M936.5 76.3V90.2M948.5 69.4V83.3M960.5 76.3V90.2M972.5 69.4V83.3M984.5 76.3V90.2M996.5 69.4V83.3M1008.5 76.3V90.2M1020.5 69.4V83.3M1032.5 76.3V90.2M1044.5 69.4V83.3M1056.5 76.3V90.2M1068.5 69.4V83.3M1080.5 76.3V90.2M1092.5 69.4V83.3M1104.5 76.3V90.2M1116.5 69.4V83.3M1128.5 76.3V90.2M1140.5 69.4V83.3M1152.5 76.3V90.2M1164.5 69.4V83.3M1176.5 76.3V90.2M1188.5 69.4V83.3M1200.5 76.3V90.2M1212.5 69.4V83.3M1224.5 76.3V90.2M1236.5 69.4V83.3M1248.5 76.3V90.2M1260.5 69.4V83.3M1272.5 76.3V90.2M1284.5 69.4V83.3M1296.5 76.3V90.2M1308.5 69.4V83.3M1320.5 76.3V90.2M1332.5 69.4V83.3M1344.5 76.3V90.2M1356.5 69.4V83.3M1368.5 76.3V90.2M1380.5 69.4V83.3M1392.5 76.3V90.2M1404.5 69.4V83.3M-11.5 97.1V111.0M0.5 90.2V104.0M12.5 97.1V111.0M24.5 90.2V104.0M36.5 97.1V111.0M48.5 90.2V104.0M60.5 97.1V111.0M72.5 90.2V104.0M84.5 97.1V111.0M96.5 90.2V104.0M108.5 97.1V111.0M120.5 90.2V104.0M132.5 97.1V111.0M144.5 90.2V104.0M156.5 97.1V111.0M168.5 90.2V104.0M180.5 97.1V111.0M192.5 90.2V104.0M204.5 97.1V111.0M216.5 90.2V104.0M228.5 97.1V111.0M240.5 90.2V104.0M252.5 97.1V111.0M264.5 90.2V104.0M276.5 97.1V111.0M288.5 90.2V104.0M300.5 97.1V111.0M312.5 90.2V104.0M324.5 97.1V111.0M336.5 90.2V104.0M348.5 97.1V111.0M360.5 90.2V104.0M372.5 97.1V111.0M384.5 90.2V104.0M396.5 97.1V111.0M408.5 90.2V104.0M420.5 97.1V111.0M432.5 90.2V104.0M444.5 97.1V111.0M456.5 90.2V104.0M468.5 97.1V111.0M480.5 90.2V104.0M492.5 97.1V111.0M504.5 90.2V104.0M516.5 97.1V111.0M528.5 90.2V104.0M540.5 97.1V111.0M552.5 90.2V104.0M564.5 97.1V111.0M576.5 90.2V104.0M588.5 97.1V111.0M600.5 90.2V104.0M612.5 97.1V111.0M624.5 90.2V104.0M636.5 97.1V111.0M648.5 90.2V104.0M660.5 97.1V111.0M672.5 90.2V104.0M684.5 97.1V111.0M696.5 90.2V104.0M708.5 97.1V111.0M720.5 90.2V104.0M732.5 97.1V111.0M744.5 90.2V104.0M756.5 97.1V111.0M768.5 90.2V104.0M780.5 97.1V111.0M792.5 90.2V104.0M804.5 97.1V111.0M816.5 90.2V104.0M828.5 97.1V111.0M840.5 90.2V104.0M852.5 97.1V111.0M864.5 90.2V104.0M876.5 97.1V111.0M888.5 90.2V104.0M900.5 97.1V111.0M912.5 90.2V104.0M924.5 97.1V111.0M936.5 90.2V104.0M948.5 97.1V111.0M960.5 90.2V104.0M972.5 97.1V111.0M984.5 90.2V104.0M996.5 97.1V111.0M1008.5 90.2V104.0M1020.5 97.1V111.0M1032.5 90.2V104.0M1044.5 97.1V111.0M1056.5 90.2V104.0M1068.5 97.1V111.0M1080.5 90.2V104.0M1092.5 97.1V111.0M1104.5 90.2V104.0M1116.5 97.1V111.0M1128.5 90.2V104.0M1140.5 97.1V111.0M1152.5 90.2V104.0M1164.5 97.1V111.0M1176.5 90.2V104.0M1188.5 97.1V111.0M1200.5 90.2V104.0M1212.5 97.1V111.0M1224.5 90.2V104.0M1236.5 97.1V111.0M1248.5 90.2V104.0M1260.5 97.1V111.0M1272.5 90.2V104.0M1284.5 97.1V111.0M1296.5 90.2V104.0M1308.5 97.1V111.0M1320.5 90.2V104.0M1332.5 97.1V111.0M1344.5 90.2V104.0M1356.5 97.1V111.0M1368.5 90.2V104.0M1380.5 97.1V111.0M1392.5 90.2V104.0M-23.5 117.9V131.8M-11.5 111.0V124.8M0.5 117.9V131.8M12.5 111.0V124.8M24.5 117.9V131.8M36.5 111.0V124.8M48.5 117.9V131.8M60.5 111.0V124.8M72.5 117.9V131.8M84.5 111.0V124.8M96.5 117.9V131.8M108.5 111.0V124.8M120.5 117.9V131.8M132.5 111.0V124.8M144.5 117.9V131.8M156.5 111.0V124.8M168.5 117.9V131.8M180.5 111.0V124.8M192.5 117.9V131.8M204.5 111.0V124.8M216.5 117.9V131.8M228.5 111.0V124.8M240.5 117.9V131.8M252.5 111.0V124.8M264.5 117.9V131.8M276.5 111.0V124.8M288.5 117.9V131.8M300.5 111.0V124.8M312.5 117.9V131.8M324.5 111.0V124.8M336.5 117.9V131.8M348.5 111.0V124.8M360.5 117.9V131.8M372.5 111.0V124.8M384.5 117.9V131.8M396.5 111.0V124.8M408.5 117.9V131.8M420.5 111.0V124.8M432.5 117.9V131.8M444.5 111.0V124.8M456.5 117.9V131.8M468.5 111.0V124.8M480.5 117.9V131.8M492.5 111.0V124.8M504.5 117.9V131.8M516.5 111.0V124.8M528.5 117.9V131.8M540.5 111.0V124.8M552.5 117.9V131.8M564.5 111.0V124.8M576.5 117.9V131.8M588.5 111.0V124.8M600.5 117.9V131.8M612.5 111.0V124.8M624.5 117.9V131.8M636.5 111.0V124.8M648.5 117.9V131.8M660.5 111.0V124.8M672.5 117.9V131.8M684.5 111.0V124.8M696.5 117.9V131.8M708.5 111.0V124.8M720.5 117.9V131.8M732.5 111.0V124.8M744.5 117.9V131.8M756.5 111.0V124.8M768.5 117.9V131.8M780.5 111.0V124.8M792.5 117.9V131.8M804.5 111.0V124.8M816.5 117.9V131.8M828.5 111.0V124.8M840.5 117.9V131.8M852.5 111.0V124.8M864.5 117.9V131.8M876.5 111.0V124.8M888.5 117.9V131.8M900.5 111.0V124.8M912.5 117.9V131.8M924.5 111.0V124.8M936.5 117.9V131.8M948.5 111.0V124.8M960.5 117.9V131.8M972.5 111.0V124.8M984.5 117.9V131.8M996.5 111.0V124.8M1008.5 117.9V131.8M1020.5 111.0V124.8M1032.5 117.9V131.8M1044.5 111.0V124.8M1056.5 117.9V131.8M1068.5 111.0V124.8M1080.5 117.9V131.8M1092.5 111.0V124.8M1104.5 117.9V131.8M1116.5 111.0V124.8M1128.5 117.9V131.8M1140.5 111.0V124.8M1152.5 117.9V131.8M1164.5 111.0V124.8M1176.5 117.9V131.8M1188.5 111.0V124.8M1200.5 117.9V131.8M1212.5 111.0V124.8M1224.5 117.9V131.8M1236.5 111.0V124.8M1248.5 117.9V131.8M1260.5 111.0V124.8M1272.5 117.9V131.8M1284.5 111.0V124.8M1296.5 117.9V131.8M1308.5 111.0V124.8M1320.5 117.9V131.8M1332.5 111.0V124.8M1344.5 117.9V131.8M1356.5 111.0V124.8M1368.5 117.9V131.8M1380.5 111.0V124.8M1392.5 117.9V131.8M1404.5 111.0V124.8M-11.5 138.7V152.5M0.5 131.8V145.6M12.5 138.7V152.5M24.5 131.8V145.6M36.5 138.7V152.5M48.5 131.8V145.6M60.5 138.7V152.5M72.5 131.8V145.6M84.5 138.7V152.5M96.5 131.8V145.6M108.5 138.7V152.5M120.5 131.8V145.6M132.5 138.7V152.5M144.5 131.8V145.6M156.5 138.7V152.5M168.5 131.8V145.6M180.5 138.7V152.5M192.5 131.8V145.6M204.5 138.7V152.5M216.5 131.8V145.6M228.5 138.7V152.5M240.5 131.8V145.6M252.5 138.7V152.5M264.5 131.8V145.6M276.5 138.7V152.5M288.5 131.8V145.6M300.5 138.7V152.5M312.5 131.8V145.6M324.5 138.7V152.5M336.5 131.8V145.6M348.5 138.7V152.5M360.5 131.8V145.6M372.5 138.7V152.5M384.5 131.8V145.6M396.5 138.7V152.5M408.5 131.8V145.6M420.5 138.7V152.5M432.5 131.8V145.6M444.5 138.7V152.5M456.5 131.8V145.6M468.5 138.7V152.5M480.5 131.8V145.6M492.5 138.7V152.5M504.5 131.8V145.6M516.5 138.7V152.5M528.5 131.8V145.6M540.5 138.7V152.5M552.5 131.8V145.6M564.5 138.7V152.5M576.5 131.8V145.6M588.5 138.7V152.5M600.5 131.8V145.6M612.5 138.7V152.5M624.5 131.8V145.6M636.5 138.7V152.5M648.5 131.8V145.6M660.5 138.7V152.5M672.5 131.8V145.6M684.5 138.7V152.5M696.5 131.8V145.6M708.5 138.7V152.5M720.5 131.8V145.6M732.5 138.7V152.5M744.5 131.8V145.6M756.5 138.7V152.5M768.5 131.8V145.6M780.5 138.7V152.5M792.5 131.8V145.6M804.5 138.7V152.5M816.5 131.8V145.6M828.5 138.7V152.5M840.5 131.8V145.6M852.5 138.7V152.5M864.5 131.8V145.6M876.5 138.7V152.5M888.5 131.8V145.6M900.5 138.7V152.5M912.5 131.8V145.6M924.5 138.7V152.5M936.5 131.8V145.6M948.5 138.7V152.5M960.5 131.8V145.6M972.5 138.7V152.5M984.5 131.8V145.6M996.5 138.7V152.5M1008.5 131.8V145.6M1020.5 138.7V152.5M1032.5 131.8V145.6M1044.5 138.7V152.5M1056.5 131.8V145.6M1068.5 138.7V152.5M1080.5 131.8V145.6M1092.5 138.7V152.5M1104.5 131.8V145.6M1116.5 138.7V152.5M1128.5 131.8V145.6M1140.5 138.7V152.5M1152.5 131.8V145.6M1164.5 138.7V152.5M1176.5 131.8V145.6M1188.5 138.7V152.5M1200.5 131.8V145.6M1212.5 138.7V152.5M1224.5 131.8V145.6M1236.5 138.7V152.5M1248.5 131.8V145.6M1260.5 138.7V152.5M1272.5 131.8V145.6M1284.5 138.7V152.5M1296.5 131.8V145.6M1308.5 138.7V152.5M1320.5 131.8V145.6M1332.5 138.7V152.5M1344.5 131.8V145.6M1356.5 138.7V152.5M1368.5 131.8V145.6M1380.5 138.7V152.5M1392.5 131.8V145.6M-23.5 159.5V173.3M-11.5 152.5V166.4M0.5 159.5V173.3M12.5 152.5V166.4M24.5 159.5V173.3M36.5 152.5V166.4M48.5 159.5V173.3M60.5 152.5V166.4M72.5 159.5V173.3M84.5 152.5V166.4M96.5 159.5V173.3M108.5 152.5V166.4M120.5 159.5V173.3M132.5 152.5V166.4M144.5 159.5V173.3M156.5 152.5V166.4M168.5 159.5V173.3M180.5 152.5V166.4M192.5 159.5V173.3M204.5 152.5V166.4M216.5 159.5V173.3M228.5 152.5V166.4M240.5 159.5V173.3M252.5 152.5V166.4M264.5 159.5V173.3M276.5 152.5V166.4M288.5 159.5V173.3M300.5 152.5V166.4M312.5 159.5V173.3M324.5 152.5V166.4M336.5 159.5V173.3M348.5 152.5V166.4M360.5 159.5V173.3M372.5 152.5V166.4M384.5 159.5V173.3M396.5 152.5V166.4M408.5 159.5V173.3M420.5 152.5V166.4M432.5 159.5V173.3M444.5 152.5V166.4M456.5 159.5V173.3M468.5 152.5V166.4M480.5 159.5V173.3M492.5 152.5V166.4M504.5 159.5V173.3M516.5 152.5V166.4M528.5 159.5V173.3M540.5 152.5V166.4M552.5 159.5V173.3M564.5 152.5V166.4M576.5 159.5V173.3M588.5 152.5V166.4M600.5 159.5V173.3M612.5 152.5V166.4M624.5 159.5V173.3M636.5 152.5V166.4M648.5 159.5V173.3M660.5 152.5V166.4M672.5 159.5V173.3M684.5 152.5V166.4M696.5 159.5V173.3M708.5 152.5V166.4M720.5 159.5V173.3M732.5 152.5V166.4M744.5 159.5V173.3M756.5 152.5V166.4M768.5 159.5V173.3M780.5 152.5V166.4M792.5 159.5V173.3M804.5 152.5V166.4M816.5 159.5V173.3M828.5 152.5V166.4M840.5 159.5V173.3M852.5 152.5V166.4M864.5 159.5V173.3M876.5 152.5V166.4M888.5 159.5V173.3M900.5 152.5V166.4M912.5 159.5V173.3M924.5 152.5V166.4M936.5 159.5V173.3M948.5 152.5V166.4M960.5 159.5V173.3M972.5 152.5V166.4M984.5 159.5V173.3M996.5 152.5V166.4M1008.5 159.5V173.3M1020.5 152.5V166.4M1032.5 159.5V173.3M1044.5 152.5V166.4M1056.5 159.5V173.3M1068.5 152.5V166.4M1080.5 159.5V173.3M1092.5 152.5V166.4M1104.5 159.5V173.3M1116.5 152.5V166.4M1128.5 159.5V173.3M1140.5 152.5V166.4M1152.5 159.5V173.3M1164.5 152.5V166.4M1176.5 159.5V173.3M1188.5 152.5V166.4M1200.5 159.5V173.3M1212.5 152.5V166.4M1224.5 159.5V173.3M1236.5 152.5V166.4M1248.5 159.5V173.3M1260.5 152.5V166.4M1272.5 159.5V173.3M1284.5 152.5V166.4M1296.5 159.5V173.3M1308.5 152.5V166.4M1320.5 159.5V173.3M1332.5 152.5V166.4M1344.5 159.5V173.3M1356.5 152.5V166.4M1368.5 159.5V173.3M1380.5 152.5V166.4M1392.5 159.5V173.3M1404.5 152.5V166.4" fill="none" stroke="#e5e5e7" stroke-width="0.85"/></svg>
</div>
<div class="t" style="left:580.5px;top:140.12px;font-size:40.5px;color:#333;letter-spacing:-0.3px;"><span style="color:#1b4a65">Forum</span><span style="color:#1e8bc3;font-weight:bold">ISM</span></div>
<div class="t" style="left:777.5px;top:145.5px;font-size:9.3px;line-height:10px;color:#12344a;letter-spacing:-0.1px">Informations-<br>Sicherheits-<br>Management</div>
<div class="t" style="left:667.3px;top:193.69px;font-size:16.9px;color:#444;">Musterfirma</div>
<div id="ov"></div>
<svg class="abs" style="left:47px;top:258px" width="6" height="10" viewBox="0 0 6 10"><path d="M0.5 0.5 L5.5 5 L0.5 9.5Z" fill="#333"/></svg>
<div class="t" style="left:61px;top:256.00px;font-size:15px;color:#333;">Übersicht</div>
<div class="panel" style="left:24px;top:289px;width:911px;height:239px"><div class="ph"></div></div>
<div class="t" style="left:35px;top:297.33px;font-size:13.9px;color:#2b2b2b;font-weight:bold;letter-spacing:-0.38px;">Informationsverbund</div>
<svg class="abs" style="left:909px;top:297.5px" width="15" height="12" viewBox="0 0 15 12"><g fill="none" stroke="#646464" stroke-linecap="round"><path d="M9.6 0.8 L4.4 10.9" stroke-width="1.7"/><path d="M8.3 1.6 C5.2 1.6 2.6 3.6 0.9 5.7 C1.9 7.1 3.2 8.3 4.5 9" stroke-width="1.6"/><path d="M7.2 3.3 C5.9 3.6 5 4.6 4.9 5.9" stroke-width="1.1"/><path d="M10.9 2.6 C12.3 3.4 13.4 4.5 14.1 5.7 C12.5 8 10 9.8 7.2 9.8" stroke-width="1.4"/></g></svg>
<svg class="abs" style="left:30.0px;top:331.7px" width="180" height="180" viewBox="0 0 180 180"><g transform="rotate(-90 90 90)"><circle cx="90" cy="90" r="77.35" fill="none" stroke="#9fd2e2" stroke-width="1.15" stroke-dasharray="3.6 2.8"/><circle cx="90" cy="90" r="68.7" fill="none" stroke="#9fd2e2" stroke-width="1.15" stroke-dasharray="3.6 2.8"/><circle cx="90" cy="90" r="77.35" fill="none" stroke="#08966e" stroke-width="4.3" stroke-linecap="round" stroke-dasharray="97.20 486.00"/><circle cx="90" cy="90" r="68.7" fill="none" stroke="#1a87c8" stroke-width="5.5" stroke-linecap="round" stroke-dasharray="415.21 431.65"/></g></svg>
<div class="t" style="left:-180px;width:600px;text-align:center;top:375.44px;font-size:27.6px;color:#1a87c8;font-weight:bold;letter-spacing:0.3px;-webkit-text-stroke:0.4px #1a87c8;transform:scaleX(1.05);transform-origin:300px 0;">105</div>
<div class="t" style="left:-179.97px;width:600px;text-align:center;top:408.79px;font-size:12.3px;color:#2d3038;font-weight:bold;letter-spacing:0.06px;">Geschäftsprozesse</div>
<div class="t" style="left:-180px;width:600px;text-align:center;top:442.81px;font-size:13.1px;color:#858585;"><b style="color:#1a87c8">101</b> mit Schutzbedarf</div>
<div class="t" style="left:-180px;width:600px;text-align:center;top:462.51px;font-size:13.1px;color:#858585;"><b style="color:#08966e">21</b> freigegeben</div>
<svg class="abs" style="left:209.5px;top:331.7px" width="180" height="180" viewBox="0 0 180 180"><g transform="rotate(-90 90 90)"><circle cx="90" cy="90" r="77.35" fill="none" stroke="#9fd2e2" stroke-width="1.15" stroke-dasharray="3.6 2.8"/><circle cx="90" cy="90" r="68.7" fill="none" stroke="#9fd2e2" stroke-width="1.15" stroke-dasharray="3.6 2.8"/><circle cx="90" cy="90" r="77.35" fill="none" stroke="#08966e" stroke-width="4.3" stroke-linecap="round" stroke-dasharray="334.13 486.00"/><circle cx="90" cy="90" r="68.7" fill="none" stroke="#1a87c8" stroke-width="5.5" stroke-linecap="round" stroke-dasharray="350.72 431.65"/></g></svg>
<div class="t" style="left:-0.5px;width:600px;text-align:center;top:375.44px;font-size:27.6px;color:#1a87c8;font-weight:bold;letter-spacing:0.3px;-webkit-text-stroke:0.4px #1a87c8;transform:scaleX(1.05);transform-origin:300px 0;">16</div>
<div class="t" style="left:-0.37000000000000455px;width:600px;text-align:center;top:408.79px;font-size:12.3px;color:#2d3038;font-weight:bold;letter-spacing:0.26px;">Datenklassen</div>
<div class="t" style="left:-0.5px;width:600px;text-align:center;top:442.81px;font-size:13.1px;color:#858585;"><b style="color:#1a87c8">13</b> mit Schutzbedarf</div>
<div class="t" style="left:-0.5px;width:600px;text-align:center;top:462.51px;font-size:13.1px;color:#858585;"><b style="color:#08966e">11</b> freigegeben</div>
<svg class="abs" style="left:388.8px;top:331.7px" width="180" height="180" viewBox="0 0 180 180"><g transform="rotate(-90 90 90)"><circle cx="90" cy="90" r="77.35" fill="none" stroke="#9fd2e2" stroke-width="1.15" stroke-dasharray="3.6 2.8"/><circle cx="90" cy="90" r="68.7" fill="none" stroke="#9fd2e2" stroke-width="1.15" stroke-dasharray="3.6 2.8"/><circle cx="90" cy="90" r="77.35" fill="none" stroke="#08966e" stroke-width="4.3" stroke-linecap="round" stroke-dasharray="247.53 486.00"/><circle cx="90" cy="90" r="68.7" fill="none" stroke="#1a87c8" stroke-width="5.5" stroke-linecap="round" stroke-dasharray="75.07 431.65"/></g></svg>
<div class="t" style="left:178.8px;width:600px;text-align:center;top:375.44px;font-size:27.6px;color:#1a87c8;font-weight:bold;letter-spacing:0.3px;-webkit-text-stroke:0.4px #1a87c8;transform:scaleX(1.05);transform-origin:300px 0;">161</div>
<svg class="abs" style="left:528.2px;top:408.3px" width="13" height="13" viewBox="0 0 13 13"><circle cx="6.5" cy="6.5" r="6.5" fill="#b5b5b5"/><circle cx="6.6" cy="3.5" r="1.2" fill="#fff"/><path d="M4.9 5.5 H7.5 V9.4 H8.2 V10.5 H4.9 V9.4 H5.7 V6.6 H4.9Z" fill="#fff"/></svg>
<div class="t" style="left:178.88px;width:600px;text-align:center;top:408.79px;font-size:12.3px;color:#2d3038;font-weight:bold;letter-spacing:0.16px;">Anwendungen</div>
<div class="t" style="left:178.8px;width:600px;text-align:center;top:442.81px;font-size:13.1px;color:#858585;"><b style="color:#1a87c8">28</b> mit Schutzniveau</div>
<div class="t" style="left:178.8px;width:600px;text-align:center;top:462.51px;font-size:13.1px;color:#858585;"><b style="color:#08966e">82</b> freigegeben</div>
<svg class="abs" style="left:568.7px;top:331.7px" width="180" height="180" viewBox="0 0 180 180"><g transform="rotate(-90 90 90)"><circle cx="90" cy="90" r="77.35" fill="none" stroke="#9fd2e2" stroke-width="1.15" stroke-dasharray="3.6 2.8"/><circle cx="90" cy="90" r="68.7" fill="none" stroke="#9fd2e2" stroke-width="1.15" stroke-dasharray="3.6 2.8"/><circle cx="90" cy="90" r="77.35" fill="none" stroke="#08966e" stroke-width="4.3" stroke-linecap="round" stroke-dasharray="123.43 486.00"/><circle cx="90" cy="90" r="68.7" fill="none" stroke="#1a87c8" stroke-width="5.5" stroke-linecap="round" stroke-dasharray="123.33 431.65"/></g></svg>
<div class="t" style="left:358.70000000000005px;width:600px;text-align:center;top:375.44px;font-size:27.6px;color:#1a87c8;font-weight:bold;letter-spacing:0.3px;-webkit-text-stroke:0.4px #1a87c8;transform:scaleX(1.05);transform-origin:300px 0;">63</div>
<div class="t" style="left:358.76px;width:600px;text-align:center;top:408.79px;font-size:12.3px;color:#2d3038;font-weight:bold;letter-spacing:0.12px;">Systeme</div>
<div class="t" style="left:358.70000000000005px;width:600px;text-align:center;top:442.81px;font-size:13.1px;color:#858585;"><b style="color:#1a87c8">18</b> mit Schutzniveau</div>
<div class="t" style="left:358.70000000000005px;width:600px;text-align:center;top:462.51px;font-size:13.1px;color:#858585;"><b style="color:#08966e">16</b> freigegeben</div>
<svg class="abs" style="left:748.5px;top:331.7px" width="180" height="180" viewBox="0 0 180 180"><g transform="rotate(-90 90 90)"><circle cx="90" cy="90" r="77.35" fill="none" stroke="#9fd2e2" stroke-width="1.15" stroke-dasharray="3.6 2.8"/><circle cx="90" cy="90" r="68.7" fill="none" stroke="#9fd2e2" stroke-width="1.15" stroke-dasharray="3.6 2.8"/><circle cx="90" cy="90" r="77.35" fill="none" stroke="#08966e" stroke-width="4.3" stroke-linecap="round" stroke-dasharray="306.00 486.00"/><circle cx="90" cy="90" r="68.7" fill="none" stroke="#1a87c8" stroke-width="5.5" stroke-linecap="round" stroke-dasharray="271.78 431.65"/></g></svg>
<div class="t" style="left:538.5px;width:600px;text-align:center;top:375.44px;font-size:27.6px;color:#1a87c8;font-weight:bold;letter-spacing:0.3px;-webkit-text-stroke:0.4px #1a87c8;transform:scaleX(1.05);transform-origin:300px 0;">27</div>
<div class="t" style="left:538.8px;width:600px;text-align:center;top:408.79px;font-size:12.3px;color:#2d3038;font-weight:bold;letter-spacing:0.6px;">Infrastrukturobjekte</div>
<div class="t" style="left:538.5px;width:600px;text-align:center;top:442.81px;font-size:13.1px;color:#858585;"><b style="color:#1a87c8">17</b> mit Schutzniveau</div>
<div class="t" style="left:538.5px;width:600px;text-align:center;top:462.51px;font-size:13.1px;color:#858585;"><b style="color:#08966e">17</b> freigegeben</div>
<div class="panel" style="left:955px;top:289px;width:445px;height:369px"><div class="ph"></div></div>
<div class="t" style="left:966.5px;top:296.59px;font-size:13.6px;color:#2b2b2b;font-weight:bold;letter-spacing:-0.5px;">Risiko-Cockpit</div>
<svg class="abs" style="left:1375px;top:297.5px" width="15" height="12" viewBox="0 0 15 12"><g fill="none" stroke="#646464" stroke-linecap="round"><path d="M9.6 0.8 L4.4 10.9" stroke-width="1.7"/><path d="M8.3 1.6 C5.2 1.6 2.6 3.6 0.9 5.7 C1.9 7.1 3.2 8.3 4.5 9" stroke-width="1.6"/><path d="M7.2 3.3 C5.9 3.6 5 4.6 4.9 5.9" stroke-width="1.1"/><path d="M10.9 2.6 C12.3 3.4 13.4 4.5 14.1 5.7 C12.5 8 10 9.8 7.2 9.8" stroke-width="1.4"/></g></svg>
<div class="t" style="left:736.4000000000001px;width:600px;text-align:center;top:337.89px;font-size:27.3px;color:#1a87c8;font-weight:bold;-webkit-text-stroke:0.4px #1a87c8;transform:scaleX(1.14);transform-origin:300px 0;">40</div>
<div class="t" style="left:736.3px;width:600px;text-align:center;top:371.08px;font-size:12.9px;color:#2d3038;font-weight:bold;">Risiken erfasst</div>
<div class="t" style="left:1146.3px;top:337.89px;font-size:27.3px;color:#1a87c8;font-weight:bold;-webkit-text-stroke:0.4px #1a87c8;transform:scaleX(1.14);transform-origin:0 0;">15</div>
<div class="t" style="left:1184.5px;top:349.15px;font-size:14px;color:#858585;font-weight:bold;">/ 40</div>
<div class="t" style="left:877.3px;width:600px;text-align:center;top:371.08px;font-size:12.9px;color:#2d3038;font-weight:bold;">mit Bewertung</div>
<div class="t" style="left:1287px;top:337.89px;font-size:27.3px;color:#1a87c8;font-weight:bold;-webkit-text-stroke:0.4px #1a87c8;transform:scaleX(1.14);transform-origin:0 0;">14</div>
<div class="t" style="left:1325px;top:349.15px;font-size:14px;color:#858585;font-weight:bold;">/ 40</div>
<div class="t" style="left:1018.3px;width:600px;text-align:center;top:371.08px;font-size:12.9px;color:#2d3038;font-weight:bold;">mit Restrisiko</div>
<div class="abs" style="left:966px;top:401px;width:423px;height:1px;background:#e2e2e4"></div>
<div class="t" style="left:966.5px;top:417.16px;font-size:12.8px;color:#2b2b2b;font-weight:bold;">Restrisiken</div>
<div class="t" style="left:986px;top:457.97px;font-size:11.5px;color:#333;font-weight:bold;">SP</div>
<div class="t" style="left:701px;width:600px;text-align:center;top:486.77px;font-size:11.5px;color:#444;">4</div>
<div class="abs" style="left:1010.8px;top:478px;width:28px;height:28px;border-radius:2px;background:#fdf7b9"></div>
<div class="abs" style="left:1043px;top:478px;width:28px;height:28px;border-radius:2px;background:#fde6c1"></div>
<div class="abs" style="left:1075px;top:478px;width:28px;height:28px;border-radius:2px;background:#fcd8b1"></div>
<div class="abs" style="left:1107px;top:478px;width:28px;height:28px;border-radius:2px;background:#fbbeab"></div>
<div class="t" style="left:701px;width:600px;text-align:center;top:518.77px;font-size:11.5px;color:#444;">3</div>
<div class="abs" style="left:1010.8px;top:510px;width:28px;height:28px;border-radius:2px;background:#a6e300"></div>
<div class="t" style="left:724.8px;width:600px;text-align:center;top:518.57px;font-size:11.5px;color:#333;font-weight:bold;">3</div>
<div class="abs" style="left:1043px;top:510px;width:28px;height:28px;border-radius:2px;background:#fff000"></div>
<div class="t" style="left:757px;width:600px;text-align:center;top:518.57px;font-size:11.5px;color:#333;font-weight:bold;">1</div>
<div class="abs" style="left:1075px;top:510px;width:28px;height:28px;border-radius:2px;background:#fde6c1"></div>
<div class="abs" style="left:1107px;top:510px;width:28px;height:28px;border-radius:2px;background:#fcd8b1"></div>
<div class="t" style="left:701px;width:600px;text-align:center;top:550.77px;font-size:11.5px;color:#444;">2</div>
<div class="abs" style="left:1010.8px;top:542px;width:28px;height:28px;border-radius:2px;background:#00d300"></div>
<div class="t" style="left:724.8px;width:600px;text-align:center;top:550.57px;font-size:11.5px;color:#333;font-weight:bold;">3</div>
<div class="abs" style="left:1043px;top:542px;width:28px;height:28px;border-radius:2px;background:#a6e300"></div>
<div class="t" style="left:757px;width:600px;text-align:center;top:550.57px;font-size:11.5px;color:#333;font-weight:bold;">6</div>
<div class="abs" style="left:1075px;top:542px;width:28px;height:28px;border-radius:2px;background:#fdf7b9"></div>
<div class="abs" style="left:1107px;top:542px;width:28px;height:28px;border-radius:2px;background:#fde6c1"></div>
<div class="t" style="left:701px;width:600px;text-align:center;top:582.77px;font-size:11.5px;color:#444;">1</div>
<div class="abs" style="left:1010.8px;top:574px;width:28px;height:28px;border-radius:2px;background:#00d300"></div>
<div class="t" style="left:724.8px;width:600px;text-align:center;top:582.57px;font-size:11.5px;color:#333;font-weight:bold;">1</div>
<div class="abs" style="left:1043px;top:574px;width:28px;height:28px;border-radius:2px;background:#adf1b0"></div>
<div class="abs" style="left:1075px;top:574px;width:28px;height:28px;border-radius:2px;background:#e5f6a9"></div>
<div class="abs" style="left:1107px;top:574px;width:28px;height:28px;border-radius:2px;background:#fdf7b9"></div>
<div class="t" style="left:724.8px;width:600px;text-align:center;top:610.27px;font-size:11.5px;color:#444;">1</div>
<div class="t" style="left:757px;width:600px;text-align:center;top:610.27px;font-size:11.5px;color:#444;">2</div>
<div class="t" style="left:789px;width:600px;text-align:center;top:610.27px;font-size:11.5px;color:#444;">3</div>
<div class="t" style="left:821px;width:600px;text-align:center;top:610.27px;font-size:11.5px;color:#444;">4</div>
<div class="t" style="left:1139.5px;top:610.27px;font-size:11.5px;color:#333;font-weight:bold;">EW</div>
<div class="t" style="left:1178px;top:447.64px;font-size:13.3px;color:#8a8a8a;font-weight:bold;">Restrisikoklasse</div>
<div class="t" style="left:788.5px;width:600px;text-align:right;top:447.64px;font-size:13.3px;color:#8a8a8a;font-weight:bold;">Anzahl</div>
<div class="abs" style="left:1178px;top:466px;width:211px;height:1px;background:#dcdcde"></div>
<div class="abs" style="left:1180px;top:472px;width:5px;height:20px;border-radius:2px;background:#ebebec"></div>
<div class="t" style="left:1196px;top:476.08px;font-size:12.9px;color:#c6c6c8;">A - existenzbedrohend</div>
<div class="abs" style="left:1346px;top:472px;width:40px;height:20px;border-radius:3px;background:#f5f5f6;overflow:hidden"><div class="abs" style="right:0;top:0;width:5px;height:20px;background:#ebebec"></div></div>
<div class="t" style="left:1063.5px;width:600px;text-align:center;top:475.92px;font-size:12.5px;color:#d2d2d4;font-weight:bold;">0</div>
<div class="abs" style="left:1180px;top:502px;width:5px;height:20px;border-radius:2px;background:#ebebec"></div>
<div class="t" style="left:1196px;top:506.08px;font-size:12.9px;color:#c6c6c8;">B - äußerst relevant</div>
<div class="abs" style="left:1346px;top:502px;width:40px;height:20px;border-radius:3px;background:#f5f5f6;overflow:hidden"><div class="abs" style="right:0;top:0;width:5px;height:20px;background:#ebebec"></div></div>
<div class="t" style="left:1063.5px;width:600px;text-align:center;top:505.92px;font-size:12.5px;color:#d2d2d4;font-weight:bold;">0</div>
<div class="abs" style="left:1180px;top:532px;width:5px;height:20px;border-radius:2px;background:#ebebec"></div>
<div class="t" style="left:1196px;top:536.08px;font-size:12.9px;color:#c6c6c8;">C - relevant</div>
<div class="abs" style="left:1346px;top:532px;width:40px;height:20px;border-radius:3px;background:#f5f5f6;overflow:hidden"><div class="abs" style="right:0;top:0;width:5px;height:20px;background:#ebebec"></div></div>
<div class="t" style="left:1063.5px;width:600px;text-align:center;top:535.92px;font-size:12.5px;color:#d2d2d4;font-weight:bold;">0</div>
<div class="abs" style="left:1180px;top:562px;width:5px;height:20px;border-radius:2px;background:#ffe600"></div>
<div class="t" style="left:1196px;top:566.08px;font-size:12.9px;color:#333;">D - gering</div>
<div class="abs" style="left:1346px;top:562px;width:40px;height:20px;border-radius:3px;background:#fdf5b3;overflow:hidden"><div class="abs" style="right:0;top:0;width:5px;height:20px;background:#ffe600"></div></div>
<div class="t" style="left:1063.5px;width:600px;text-align:center;top:565.92px;font-size:12.5px;color:#333;font-weight:bold;">1</div>
<div class="abs" style="left:1180px;top:592px;width:5px;height:20px;border-radius:2px;background:#a6e300"></div>
<div class="t" style="left:1196px;top:596.08px;font-size:12.9px;color:#333;">E - vernachlässigbar</div>
<div class="abs" style="left:1346px;top:592px;width:40px;height:20px;border-radius:3px;background:#e4f5ab;overflow:hidden"><div class="abs" style="right:0;top:0;width:5px;height:20px;background:#a6e300"></div></div>
<div class="t" style="left:1063.5px;width:600px;text-align:center;top:595.92px;font-size:12.5px;color:#333;font-weight:bold;">9</div>
<div class="abs" style="left:1180px;top:622px;width:5px;height:20px;border-radius:2px;background:#00cc00"></div>
<div class="t" style="left:1196px;top:626.08px;font-size:12.9px;color:#333;">F - nicht relevant</div>
<div class="abs" style="left:1346px;top:622px;width:40px;height:20px;border-radius:3px;background:#aef0b3;overflow:hidden"><div class="abs" style="right:0;top:0;width:5px;height:20px;background:#00cc00"></div></div>
<div class="t" style="left:1063.5px;width:600px;text-align:center;top:625.92px;font-size:12.5px;color:#333;font-weight:bold;">4</div>
<div class="abs" style="left:0;top:849px;width:1424px;height:1px;background:#e4e4e6"></div>
<div class="abs" style="left:1360px;top:779px;width:50px;height:50px;border-radius:50%;background:#1f87c6;box-shadow:0 2px 6px rgba(0,0,0,.32)"></div>
<svg class="abs" style="left:1368px;top:789px" width="36" height="32" viewBox="0 0 36 32"><path d="M3.3 3 H28.8 V15 M3.3 3 V25 H18" fill="none" stroke="#fff" stroke-width="2"/><rect x="2.3" y="2.7" width="27.5" height="6" fill="#fff"/><circle cx="25.1" cy="22.3" r="7.3" fill="#fff"/><path d="M25.1 18 V26.6 M20.8 22.3 H29.4" stroke="#1f87c6" stroke-width="2.3"/></svg>
</body></html>
